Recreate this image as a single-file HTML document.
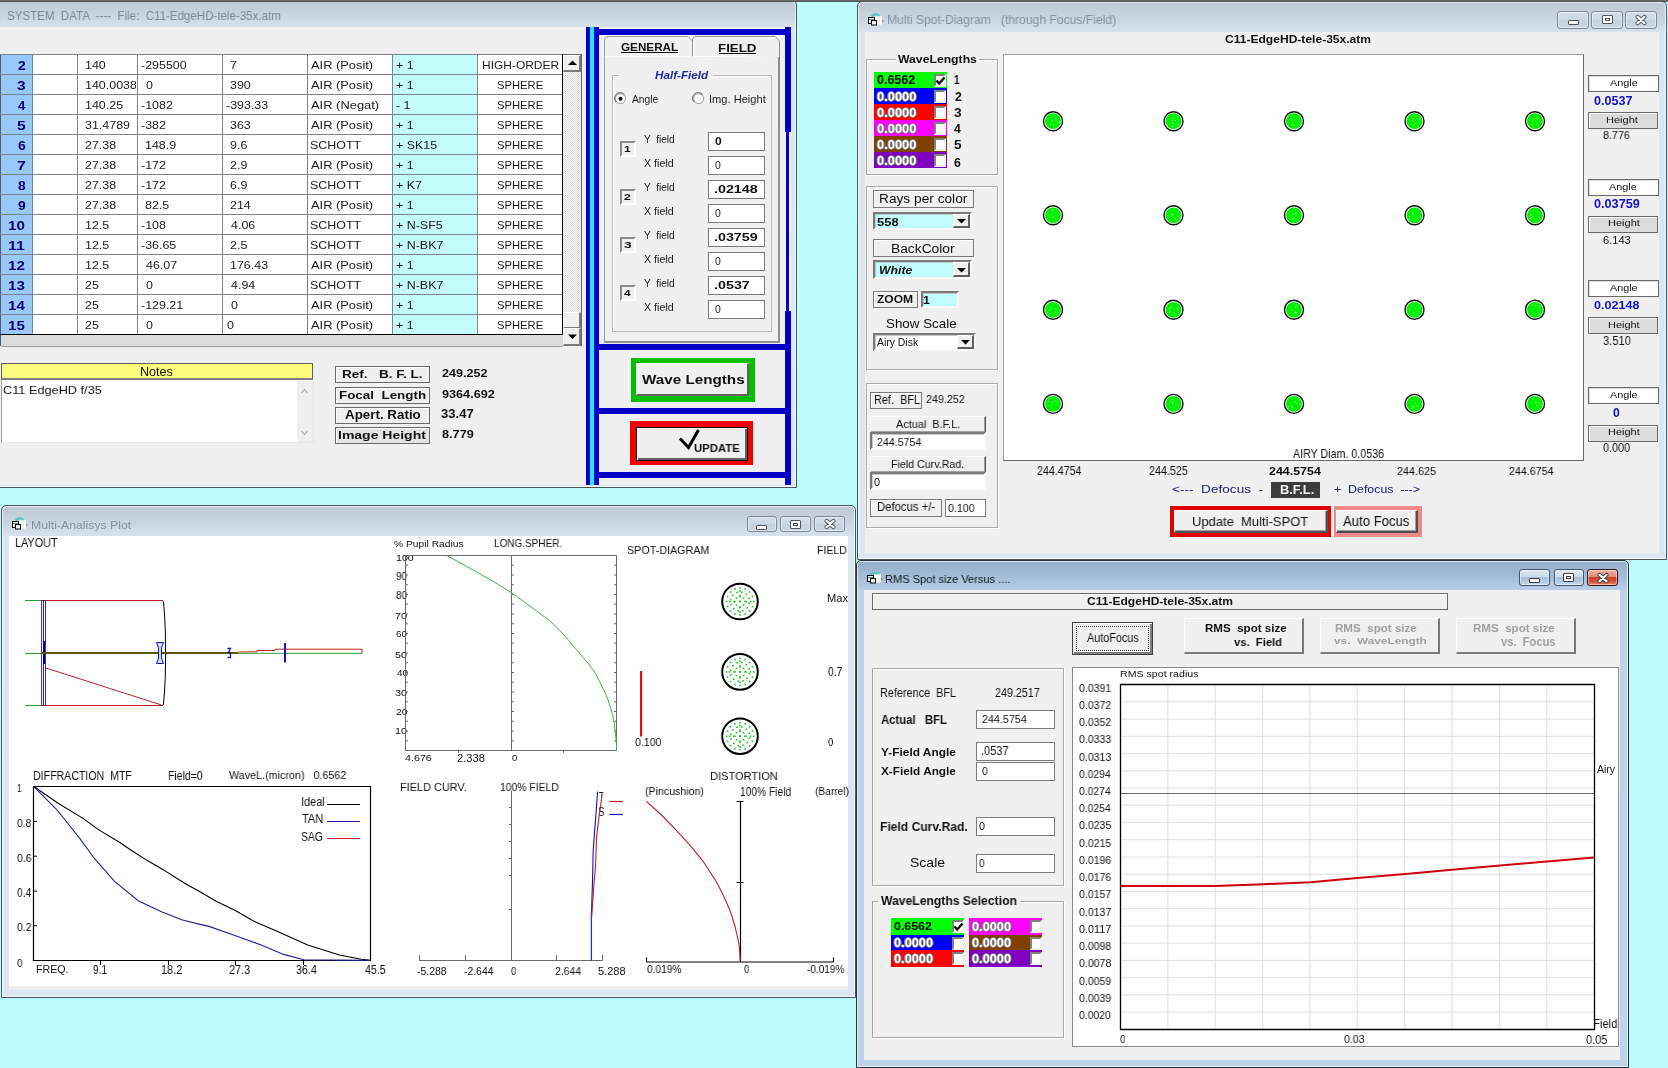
<!DOCTYPE html>
<html><head><meta charset="utf-8"><title>C11 EdgeHD</title>
<style>
*{margin:0;padding:0;box-sizing:border-box}
html,body{width:1668px;height:1068px;overflow:hidden}
body{position:relative;background:#bdfcfc;font-family:"Liberation Sans",sans-serif;font-size:11px;color:#000}
.a{position:absolute}
.t{position:absolute;white-space:pre;line-height:1;will-change:transform}
svg{position:absolute;left:0;top:0}
</style></head><body>
<div class="a" style="left:-10px;top:0px;width:807px;height:488px;border:1px solid #4a565e;border-radius:5px 5px 0 0;background:linear-gradient(#bdc9d5 0px,#c8d5e1 14px,#d6e3ef 26px,#d9e5f0 27px,#dce7f1 100%);box-shadow:inset 0 0 0 1px rgba(255,255,255,.7)"></div>
<div class="a" style="left:0px;top:27px;width:791px;height:458px;background:#f0f0f0"></div>
<div class="t" style="left:6.51px;top:8.58px;font-size:13.410px;transform:scaleX(0.8608);transform-origin:0 0;color:#7d8893;">SYSTEM  DATA  ----  File:  C11-EdgeHD-tele-35x.atm</div>
<div class="a" style="left:0px;top:54px;width:562px;height:280px;background:#fff"></div>
<div class="a" style="left:392px;top:54px;width:85px;height:280px;background:#c4fcfc"></div>
<div class="a" style="left:0px;top:54px;width:32px;height:280px;background:#99c8fa"></div>
<div class="a" style="left:0px;top:54px;width:1px;height:292px;background:#4a6078"></div>
<svg width="600" height="400" style="left:0;top:0"><g stroke="#7c8288" stroke-width="1"><path d="M0 54.5 H562" /><path d="M0 74.5 H562" /><path d="M0 94.5 H562" /><path d="M0 114.5 H562" /><path d="M0 134.5 H562" /><path d="M0 154.5 H562" /><path d="M0 174.5 H562" /><path d="M0 194.5 H562" /><path d="M0 214.5 H562" /><path d="M0 234.5 H562" /><path d="M0 254.5 H562" /><path d="M0 274.5 H562" /><path d="M0 294.5 H562" /><path d="M0 314.5 H562" /><path d="M0 334.5 H562" /><path d="M32.5 54 V334" /><path d="M77.5 54 V334" /><path d="M137.5 54 V334" /><path d="M222.5 54 V334" /><path d="M307.5 54 V334" /><path d="M392.5 54 V334" /><path d="M477.5 54 V334" /></g><path d="M0 334.5 H562.5 V54" stroke="#000" fill="none"/></svg>
<div class="t" style="left:17.78px;top:59.86px;font-size:12.500px;transform:scaleX(1.1150);transform-origin:0 0;font-weight:bold;color:#00006e;">2</div>
<div class="a" style="left:78px;top:55px;width:58px;height:19px;overflow:hidden">
<div class="a" style="left:-78px;top:-55px;width:700px;height:700px">
<div class="t" style="left:85.33px;top:59.82px;font-size:11.111px;transform:scaleX(1.1200);transform-origin:0 0;color:#1a1a1a;">140</div>
</div></div>
<div class="t" style="left:140.73px;top:59.82px;font-size:11.111px;transform:scaleX(1.1200);transform-origin:0 0;color:#1a1a1a;">-295500</div>
<div class="t" style="left:229.57px;top:59.82px;font-size:11.111px;transform:scaleX(1.1200);transform-origin:0 0;color:#1a1a1a;">7</div>
<div class="t" style="left:310.72px;top:59.63px;font-size:11.496px;transform:scaleX(1.1187);transform-origin:0 0;color:#1a1a1a;">AIR (Posit)</div>
<div class="t" style="left:395.57px;top:59.82px;font-size:11.111px;transform:scaleX(1.1200);transform-origin:0 0;color:#1a1a1a;">+ 1</div>
<div class="t" style="left:481.56px;top:59.82px;font-size:11.111px;transform:scaleX(1.0771);transform-origin:0 0;color:#1a1a1a;">HIGH-ORDER</div>
<div class="t" style="left:17.14px;top:79.80px;font-size:12.500px;transform:scaleX(1.2489);transform-origin:0 0;font-weight:bold;color:#00006e;">3</div>
<div class="a" style="left:78px;top:75px;width:58px;height:19px;overflow:hidden">
<div class="a" style="left:-78px;top:-75px;width:700px;height:700px">
<div class="t" style="left:85.33px;top:79.82px;font-size:11.111px;transform:scaleX(1.1200);transform-origin:0 0;color:#1a1a1a;">140.0038</div>
</div></div>
<div class="t" style="left:145.51px;top:79.82px;font-size:11.111px;transform:scaleX(1.1200);transform-origin:0 0;color:#1a1a1a;">0</div>
<div class="t" style="left:229.57px;top:79.82px;font-size:11.111px;transform:scaleX(1.1200);transform-origin:0 0;color:#1a1a1a;">390</div>
<div class="t" style="left:310.72px;top:79.63px;font-size:11.496px;transform:scaleX(1.1187);transform-origin:0 0;color:#1a1a1a;">AIR (Posit)</div>
<div class="t" style="left:395.57px;top:79.82px;font-size:11.111px;transform:scaleX(1.1200);transform-origin:0 0;color:#1a1a1a;">+ 1</div>
<div class="t" style="left:497.31px;top:79.82px;font-size:11.111px;transform:scaleX(1.0101);transform-origin:0 0;color:#1a1a1a;">SPHERE</div>
<div class="t" style="left:17.85px;top:99.80px;font-size:12.500px;transform:scaleX(1.0463);transform-origin:0 0;font-weight:bold;color:#00006e;">4</div>
<div class="a" style="left:78px;top:95px;width:58px;height:19px;overflow:hidden">
<div class="a" style="left:-78px;top:-95px;width:700px;height:700px">
<div class="t" style="left:85.33px;top:99.82px;font-size:11.111px;transform:scaleX(1.1200);transform-origin:0 0;color:#1a1a1a;">140.25</div>
</div></div>
<div class="t" style="left:140.73px;top:99.82px;font-size:11.111px;transform:scaleX(1.1200);transform-origin:0 0;color:#1a1a1a;">-1082</div>
<div class="t" style="left:225.57px;top:99.82px;font-size:11.111px;transform:scaleX(1.1200);transform-origin:0 0;color:#1a1a1a;">-393.33</div>
<div class="t" style="left:310.72px;top:99.63px;font-size:11.496px;transform:scaleX(1.1233);transform-origin:0 0;color:#1a1a1a;">AIR (Negat)</div>
<div class="t" style="left:395.57px;top:99.82px;font-size:11.111px;transform:scaleX(1.1200);transform-origin:0 0;color:#1a1a1a;">- 1</div>
<div class="t" style="left:497.31px;top:99.82px;font-size:11.111px;transform:scaleX(1.0101);transform-origin:0 0;color:#1a1a1a;">SPHERE</div>
<div class="t" style="left:17.14px;top:119.80px;font-size:12.500px;transform:scaleX(1.2489);transform-origin:0 0;font-weight:bold;color:#00006e;">5</div>
<div class="a" style="left:78px;top:115px;width:58px;height:19px;overflow:hidden">
<div class="a" style="left:-78px;top:-115px;width:700px;height:700px">
<div class="t" style="left:85.33px;top:119.82px;font-size:11.111px;transform:scaleX(1.1200);transform-origin:0 0;color:#1a1a1a;">31.4789</div>
</div></div>
<div class="t" style="left:140.73px;top:119.82px;font-size:11.111px;transform:scaleX(1.1200);transform-origin:0 0;color:#1a1a1a;">-382</div>
<div class="t" style="left:229.57px;top:119.82px;font-size:11.111px;transform:scaleX(1.1200);transform-origin:0 0;color:#1a1a1a;">363</div>
<div class="t" style="left:310.72px;top:119.63px;font-size:11.496px;transform:scaleX(1.1187);transform-origin:0 0;color:#1a1a1a;">AIR (Posit)</div>
<div class="t" style="left:395.57px;top:119.82px;font-size:11.111px;transform:scaleX(1.1200);transform-origin:0 0;color:#1a1a1a;">+ 1</div>
<div class="t" style="left:497.31px;top:119.82px;font-size:11.111px;transform:scaleX(1.0101);transform-origin:0 0;color:#1a1a1a;">SPHERE</div>
<div class="t" style="left:17.78px;top:139.86px;font-size:12.500px;transform:scaleX(1.1150);transform-origin:0 0;font-weight:bold;color:#00006e;">6</div>
<div class="a" style="left:78px;top:135px;width:58px;height:19px;overflow:hidden">
<div class="a" style="left:-78px;top:-135px;width:700px;height:700px">
<div class="t" style="left:85.33px;top:139.82px;font-size:11.111px;transform:scaleX(1.1200);transform-origin:0 0;color:#1a1a1a;">27.38</div>
</div></div>
<div class="t" style="left:144.73px;top:139.82px;font-size:11.111px;transform:scaleX(1.1200);transform-origin:0 0;color:#1a1a1a;">148.9</div>
<div class="t" style="left:229.57px;top:139.82px;font-size:11.111px;transform:scaleX(1.1200);transform-origin:0 0;color:#1a1a1a;">9.6</div>
<div class="t" style="left:310.33px;top:139.82px;font-size:11.111px;transform:scaleX(1.1200);transform-origin:0 0;color:#1a1a1a;">SCHOTT</div>
<div class="t" style="left:395.57px;top:139.82px;font-size:11.111px;transform:scaleX(1.1200);transform-origin:0 0;color:#1a1a1a;">+ SK15</div>
<div class="t" style="left:497.31px;top:139.82px;font-size:11.111px;transform:scaleX(1.0101);transform-origin:0 0;color:#1a1a1a;">SPHERE</div>
<div class="t" style="left:17.13px;top:159.80px;font-size:12.500px;transform:scaleX(1.2711);transform-origin:0 0;font-weight:bold;color:#00006e;">7</div>
<div class="a" style="left:78px;top:155px;width:58px;height:19px;overflow:hidden">
<div class="a" style="left:-78px;top:-155px;width:700px;height:700px">
<div class="t" style="left:85.33px;top:159.82px;font-size:11.111px;transform:scaleX(1.1200);transform-origin:0 0;color:#1a1a1a;">27.38</div>
</div></div>
<div class="t" style="left:140.73px;top:159.82px;font-size:11.111px;transform:scaleX(1.1200);transform-origin:0 0;color:#1a1a1a;">-172</div>
<div class="t" style="left:229.57px;top:159.82px;font-size:11.111px;transform:scaleX(1.1200);transform-origin:0 0;color:#1a1a1a;">2.9</div>
<div class="t" style="left:310.72px;top:159.63px;font-size:11.496px;transform:scaleX(1.1187);transform-origin:0 0;color:#1a1a1a;">AIR (Posit)</div>
<div class="t" style="left:395.57px;top:159.82px;font-size:11.111px;transform:scaleX(1.1200);transform-origin:0 0;color:#1a1a1a;">+ 1</div>
<div class="t" style="left:497.31px;top:159.82px;font-size:11.111px;transform:scaleX(1.0101);transform-origin:0 0;color:#1a1a1a;">SPHERE</div>
<div class="t" style="left:17.78px;top:179.86px;font-size:12.500px;transform:scaleX(1.1150);transform-origin:0 0;font-weight:bold;color:#00006e;">8</div>
<div class="a" style="left:78px;top:175px;width:58px;height:19px;overflow:hidden">
<div class="a" style="left:-78px;top:-175px;width:700px;height:700px">
<div class="t" style="left:85.33px;top:179.82px;font-size:11.111px;transform:scaleX(1.1200);transform-origin:0 0;color:#1a1a1a;">27.38</div>
</div></div>
<div class="t" style="left:140.73px;top:179.82px;font-size:11.111px;transform:scaleX(1.1200);transform-origin:0 0;color:#1a1a1a;">-172</div>
<div class="t" style="left:229.57px;top:179.82px;font-size:11.111px;transform:scaleX(1.1200);transform-origin:0 0;color:#1a1a1a;">6.9</div>
<div class="t" style="left:310.33px;top:179.82px;font-size:11.111px;transform:scaleX(1.1200);transform-origin:0 0;color:#1a1a1a;">SCHOTT</div>
<div class="t" style="left:395.57px;top:179.82px;font-size:11.111px;transform:scaleX(1.1200);transform-origin:0 0;color:#1a1a1a;">+ K7</div>
<div class="t" style="left:497.31px;top:179.82px;font-size:11.111px;transform:scaleX(1.0101);transform-origin:0 0;color:#1a1a1a;">SPHERE</div>
<div class="t" style="left:17.78px;top:199.86px;font-size:12.500px;transform:scaleX(1.1150);transform-origin:0 0;font-weight:bold;color:#00006e;">9</div>
<div class="a" style="left:78px;top:195px;width:58px;height:19px;overflow:hidden">
<div class="a" style="left:-78px;top:-195px;width:700px;height:700px">
<div class="t" style="left:85.33px;top:199.82px;font-size:11.111px;transform:scaleX(1.1200);transform-origin:0 0;color:#1a1a1a;">27.38</div>
</div></div>
<div class="t" style="left:144.73px;top:199.82px;font-size:11.111px;transform:scaleX(1.1200);transform-origin:0 0;color:#1a1a1a;">82.5</div>
<div class="t" style="left:229.57px;top:199.82px;font-size:11.111px;transform:scaleX(1.1200);transform-origin:0 0;color:#1a1a1a;">214</div>
<div class="t" style="left:310.72px;top:199.63px;font-size:11.496px;transform:scaleX(1.1187);transform-origin:0 0;color:#1a1a1a;">AIR (Posit)</div>
<div class="t" style="left:395.57px;top:199.82px;font-size:11.111px;transform:scaleX(1.1200);transform-origin:0 0;color:#1a1a1a;">+ 1</div>
<div class="t" style="left:497.31px;top:199.82px;font-size:11.111px;transform:scaleX(1.0101);transform-origin:0 0;color:#1a1a1a;">SPHERE</div>
<div class="t" style="left:8.40px;top:219.80px;font-size:12.500px;transform:scaleX(1.2162);transform-origin:0 0;font-weight:bold;color:#00006e;">10</div>
<div class="a" style="left:78px;top:215px;width:58px;height:19px;overflow:hidden">
<div class="a" style="left:-78px;top:-215px;width:700px;height:700px">
<div class="t" style="left:85.33px;top:219.82px;font-size:11.111px;transform:scaleX(1.1200);transform-origin:0 0;color:#1a1a1a;">12.5</div>
</div></div>
<div class="t" style="left:140.73px;top:219.82px;font-size:11.111px;transform:scaleX(1.1200);transform-origin:0 0;color:#1a1a1a;">-108</div>
<div class="t" style="left:230.53px;top:219.82px;font-size:11.111px;transform:scaleX(1.1200);transform-origin:0 0;color:#1a1a1a;">4.06</div>
<div class="t" style="left:310.33px;top:219.82px;font-size:11.111px;transform:scaleX(1.1200);transform-origin:0 0;color:#1a1a1a;">SCHOTT</div>
<div class="t" style="left:395.57px;top:219.82px;font-size:11.111px;transform:scaleX(1.1200);transform-origin:0 0;color:#1a1a1a;">+ N-SF5</div>
<div class="t" style="left:497.31px;top:219.82px;font-size:11.111px;transform:scaleX(1.0101);transform-origin:0 0;color:#1a1a1a;">SPHERE</div>
<div class="t" style="left:8.36px;top:239.80px;font-size:12.500px;transform:scaleX(1.2647);transform-origin:0 0;font-weight:bold;color:#00006e;">11</div>
<div class="a" style="left:78px;top:235px;width:58px;height:19px;overflow:hidden">
<div class="a" style="left:-78px;top:-235px;width:700px;height:700px">
<div class="t" style="left:85.33px;top:239.82px;font-size:11.111px;transform:scaleX(1.1200);transform-origin:0 0;color:#1a1a1a;">12.5</div>
</div></div>
<div class="t" style="left:140.73px;top:239.82px;font-size:11.111px;transform:scaleX(1.1200);transform-origin:0 0;color:#1a1a1a;">-36.65</div>
<div class="t" style="left:229.57px;top:239.82px;font-size:11.111px;transform:scaleX(1.1200);transform-origin:0 0;color:#1a1a1a;">2.5</div>
<div class="t" style="left:310.33px;top:239.82px;font-size:11.111px;transform:scaleX(1.1200);transform-origin:0 0;color:#1a1a1a;">SCHOTT</div>
<div class="t" style="left:395.57px;top:239.82px;font-size:11.111px;transform:scaleX(1.1200);transform-origin:0 0;color:#1a1a1a;">+ N-BK7</div>
<div class="t" style="left:497.31px;top:239.82px;font-size:11.111px;transform:scaleX(1.0101);transform-origin:0 0;color:#1a1a1a;">SPHERE</div>
<div class="t" style="left:8.40px;top:259.80px;font-size:12.500px;transform:scaleX(1.2116);transform-origin:0 0;font-weight:bold;color:#00006e;">12</div>
<div class="a" style="left:78px;top:255px;width:58px;height:19px;overflow:hidden">
<div class="a" style="left:-78px;top:-255px;width:700px;height:700px">
<div class="t" style="left:85.33px;top:259.82px;font-size:11.111px;transform:scaleX(1.1200);transform-origin:0 0;color:#1a1a1a;">12.5</div>
</div></div>
<div class="t" style="left:145.51px;top:259.82px;font-size:11.111px;transform:scaleX(1.1200);transform-origin:0 0;color:#1a1a1a;">46.07</div>
<div class="t" style="left:229.57px;top:259.82px;font-size:11.111px;transform:scaleX(1.1200);transform-origin:0 0;color:#1a1a1a;">176.43</div>
<div class="t" style="left:310.72px;top:259.63px;font-size:11.496px;transform:scaleX(1.1187);transform-origin:0 0;color:#1a1a1a;">AIR (Posit)</div>
<div class="t" style="left:395.57px;top:259.82px;font-size:11.111px;transform:scaleX(1.1200);transform-origin:0 0;color:#1a1a1a;">+ 1</div>
<div class="t" style="left:497.31px;top:259.82px;font-size:11.111px;transform:scaleX(1.0101);transform-origin:0 0;color:#1a1a1a;">SPHERE</div>
<div class="t" style="left:8.38px;top:279.80px;font-size:12.500px;transform:scaleX(1.2116);transform-origin:0 0;font-weight:bold;color:#00006e;">13</div>
<div class="a" style="left:78px;top:275px;width:58px;height:19px;overflow:hidden">
<div class="a" style="left:-78px;top:-275px;width:700px;height:700px">
<div class="t" style="left:85.33px;top:279.82px;font-size:11.111px;transform:scaleX(1.1200);transform-origin:0 0;color:#1a1a1a;">25</div>
</div></div>
<div class="t" style="left:145.51px;top:279.82px;font-size:11.111px;transform:scaleX(1.1200);transform-origin:0 0;color:#1a1a1a;">0</div>
<div class="t" style="left:230.53px;top:279.82px;font-size:11.111px;transform:scaleX(1.1200);transform-origin:0 0;color:#1a1a1a;">4.94</div>
<div class="t" style="left:310.33px;top:279.82px;font-size:11.111px;transform:scaleX(1.1200);transform-origin:0 0;color:#1a1a1a;">SCHOTT</div>
<div class="t" style="left:395.57px;top:279.82px;font-size:11.111px;transform:scaleX(1.1200);transform-origin:0 0;color:#1a1a1a;">+ N-BK7</div>
<div class="t" style="left:497.31px;top:279.82px;font-size:11.111px;transform:scaleX(1.0101);transform-origin:0 0;color:#1a1a1a;">SPHERE</div>
<div class="t" style="left:8.40px;top:299.80px;font-size:12.500px;transform:scaleX(1.2063);transform-origin:0 0;font-weight:bold;color:#00006e;">14</div>
<div class="a" style="left:78px;top:295px;width:58px;height:19px;overflow:hidden">
<div class="a" style="left:-78px;top:-295px;width:700px;height:700px">
<div class="t" style="left:85.33px;top:299.82px;font-size:11.111px;transform:scaleX(1.1200);transform-origin:0 0;color:#1a1a1a;">25</div>
</div></div>
<div class="t" style="left:140.73px;top:299.82px;font-size:11.111px;transform:scaleX(1.1200);transform-origin:0 0;color:#1a1a1a;">-129.21</div>
<div class="t" style="left:230.53px;top:299.82px;font-size:11.111px;transform:scaleX(1.1200);transform-origin:0 0;color:#1a1a1a;">0</div>
<div class="t" style="left:310.72px;top:299.63px;font-size:11.496px;transform:scaleX(1.1187);transform-origin:0 0;color:#1a1a1a;">AIR (Posit)</div>
<div class="t" style="left:395.57px;top:299.82px;font-size:11.111px;transform:scaleX(1.1200);transform-origin:0 0;color:#1a1a1a;">+ 1</div>
<div class="t" style="left:497.31px;top:299.82px;font-size:11.111px;transform:scaleX(1.0101);transform-origin:0 0;color:#1a1a1a;">SPHERE</div>
<div class="t" style="left:8.38px;top:319.80px;font-size:12.500px;transform:scaleX(1.2116);transform-origin:0 0;font-weight:bold;color:#00006e;">15</div>
<div class="a" style="left:78px;top:315px;width:58px;height:19px;overflow:hidden">
<div class="a" style="left:-78px;top:-315px;width:700px;height:700px">
<div class="t" style="left:85.33px;top:319.82px;font-size:11.111px;transform:scaleX(1.1200);transform-origin:0 0;color:#1a1a1a;">25</div>
</div></div>
<div class="t" style="left:145.51px;top:319.82px;font-size:11.111px;transform:scaleX(1.1200);transform-origin:0 0;color:#1a1a1a;">0</div>
<div class="t" style="left:226.53px;top:319.82px;font-size:11.111px;transform:scaleX(1.1200);transform-origin:0 0;color:#1a1a1a;">0</div>
<div class="t" style="left:310.72px;top:319.63px;font-size:11.496px;transform:scaleX(1.1187);transform-origin:0 0;color:#1a1a1a;">AIR (Posit)</div>
<div class="t" style="left:395.57px;top:319.82px;font-size:11.111px;transform:scaleX(1.1200);transform-origin:0 0;color:#1a1a1a;">+ 1</div>
<div class="t" style="left:497.31px;top:319.82px;font-size:11.111px;transform:scaleX(1.0101);transform-origin:0 0;color:#1a1a1a;">SPHERE</div>
<div class="a" style="left:563px;top:54px;width:19px;height:292px;background:repeating-conic-gradient(#fafafa 0 25%, #dedede 0 50%) 0 0/2px 2px;border-right:1px solid #6a6a6a;border-top:1px solid #6a6a6a"></div>
<div class="a" style="left:563px;top:55px;width:18px;height:17px;background:#f0f0f0;border-top:1px solid #fff;border-left:1px solid #fff;border-right:2px solid #7a7a7a;border-bottom:2px solid #7a7a7a"></div>
<svg style="left:568px;top:60px" width="9" height="6"><path d="M0 5 L4.5 0.5 L9 5z" fill="#000"/></svg>
<div class="a" style="left:563px;top:312px;width:18px;height:17px;background:#f0f0f0;border-top:1px solid #fff;border-left:1px solid #fff;border-right:2px solid #7a7a7a;border-bottom:2px solid #7a7a7a"></div>
<div class="a" style="left:563px;top:328px;width:18px;height:18px;background:#f0f0f0;border-top:1px solid #fff;border-left:1px solid #fff;border-right:2px solid #7a7a7a;border-bottom:2px solid #7a7a7a"></div>
<svg style="left:568px;top:334px" width="9" height="6"><path d="M0 0.5 L4.5 5 L9 0.5z" fill="#000"/></svg>
<div class="a" style="left:1px;top:335px;width:562px;height:12px;background:#dcdcdc;border-bottom:1px solid #a0a0a0"></div>
<div class="a" style="left:1px;top:363px;width:312px;height:17px;background:#fcfc7c;border:1px solid #606060;border-bottom:2px solid #808080"></div>
<div class="t" style="left:139.71px;top:366.08px;font-size:12.135px;transform:scaleX(1.0383);transform-origin:0 0;color:#111;">Notes</div>
<div class="a" style="left:1px;top:380px;width:313px;height:63px;background:#fff;border:1px solid #a0a0a0;border-top:0;border-right-color:#e8e8e8;border-bottom-color:#e8e8e8"></div>
<div class="t" style="left:2.68px;top:385.51px;font-size:10.139px;transform:scaleX(1.2566);transform-origin:0 0;color:#1a1a1a;">C11 EdgeHD f/35</div>
<div class="a" style="left:297px;top:381px;width:16px;height:61px;background:#f0f0f0"></div>
<svg style="left:300px;top:387px" width="10" height="52"><path d="M1.5 6 L4.5 2.5 L7.5 6" stroke="#b8b8b8" stroke-width="1.4" fill="none"/><path d="M1.5 44 L4.5 47.5 L7.5 44" stroke="#b8b8b8" stroke-width="1.4" fill="none"/></svg>
<div class="a" style="left:335px;top:366px;width:95px;height:17px;background:#f0f0f0;border:1px solid #6a6a6a;box-shadow:inset 1px 1px 0 #fff"></div>
<div class="t" style="left:341.78px;top:369.68px;font-size:10.056px;transform:scaleX(1.3481);transform-origin:0 0;font-weight:bold;color:#111;">Ref.   B. F. L.</div>
<div class="t" style="left:441.53px;top:366.91px;font-size:11.717px;transform:scaleX(1.0772);transform-origin:0 0;font-weight:bold;color:#111;">249.252</div>
<div class="a" style="left:335px;top:387px;width:95px;height:17px;background:#f0f0f0;border:1px solid #6a6a6a;box-shadow:inset 1px 1px 0 #fff"></div>
<div class="t" style="left:338.59px;top:389.69px;font-size:11.481px;transform:scaleX(1.1684);transform-origin:0 0;font-weight:bold;color:#111;">Focal  Length</div>
<div class="t" style="left:441.69px;top:388.44px;font-size:11.629px;transform:scaleX(1.0906);transform-origin:0 0;font-weight:bold;color:#111;">9364.692</div>
<div class="a" style="left:335px;top:407px;width:95px;height:17px;background:#f0f0f0;border:1px solid #6a6a6a;box-shadow:inset 1px 1px 0 #fff"></div>
<div class="t" style="left:344.51px;top:409.45px;font-size:12.250px;transform:scaleX(1.0913);transform-origin:0 0;font-weight:bold;color:#111;">Apert. Ratio</div>
<div class="t" style="left:440.78px;top:407.68px;font-size:12.043px;transform:scaleX(1.0871);transform-origin:0 0;font-weight:bold;color:#111;">33.47</div>
<div class="a" style="left:335px;top:427px;width:95px;height:17px;background:#e4e4e4;border:1px solid #6a6a6a;box-shadow:inset 1px 1px 0 #fff"></div>
<div class="t" style="left:337.72px;top:429.90px;font-size:11.427px;transform:scaleX(1.2266);transform-origin:0 0;font-weight:bold;color:#111;">Image Height</div>
<div class="t" style="left:441.64px;top:428.89px;font-size:11.372px;transform:scaleX(1.1179);transform-origin:0 0;font-weight:bold;color:#111;">8.779</div>
<div class="a" style="left:586px;top:27px;width:4px;height:458px;background:#0000c8"></div>
<div class="a" style="left:590px;top:27px;width:4px;height:458px;background:#20e8fa"></div>
<div class="a" style="left:594px;top:27px;width:5px;height:458px;background:#0000c8"></div>
<div class="a" style="left:599px;top:29px;width:192px;height:6px;background:#0000c8"></div>
<div class="a" style="left:785px;top:27px;width:6px;height:105px;background:#0000c8"></div>
<div class="a" style="left:786px;top:132px;width:3px;height:180px;background:#0000c8"></div>
<div class="a" style="left:785px;top:311px;width:6px;height:174px;background:#0000c8"></div>
<div class="a" style="left:599px;top:344px;width:187px;height:6px;background:#0000c8"></div>
<div class="a" style="left:599px;top:408px;width:187px;height:6px;background:#0000c8"></div>
<div class="a" style="left:599px;top:472px;width:187px;height:6px;background:#0000c8"></div>
<div class="a" style="left:604px;top:56px;width:176px;height:287px;background:#f0f0f0;border:1px solid #a0a0a0;border-top:1px solid #fff;border-right:2px solid #909090;border-bottom:2px solid #909090"></div>
<svg style="left:600px;top:30px" width="190" height="30"><path d="M4.5 26.5 V10 Q4.5 6.5 8 6.5 H88 L92.5 11 V26.5" fill="#f0f0f0" stroke="#a0a0a0"/><path d="M92.5 26 V10 Q92.5 6.5 96 6.5 H175 L179.5 11 V27" fill="#f0f0f0" stroke="#909090"/><path d="M93.5 26 V11 Q93.5 7.5 96 7.5 H175" fill="none" stroke="#fff"/></svg>
<div class="t" style="left:620.76px;top:41.99px;font-size:11.388px;transform:scaleX(1.0276);transform-origin:0 0;font-weight:bold;color:#111;">GENERAL</div>
<div class="a" style="left:620.5px;top:52px;width:57.2px;height:1px;background:#111"></div>
<div class="t" style="left:717.78px;top:43.04px;font-size:11.149px;transform:scaleX(1.1976);transform-origin:0 0;font-weight:bold;color:#111;">FIELD</div>
<div class="a" style="left:718.5px;top:53.3px;width:37.4px;height:1px;background:#111"></div>
<div class="a" style="left:612px;top:75px;width:160px;height:257px;border:1px solid #b8b8b8;box-shadow:inset 1px 1px 0 #fff"></div>
<div class="a" style="left:619px;top:68px;width:94px;height:12px;background:#f0f0f0"></div>
<div class="t" style="left:654.91px;top:69.82px;font-size:11.481px;transform:scaleX(1.0163);transform-origin:0 0;font-weight:bold;font-style:italic;color:#1e2aa0;">Half-Field</div>
<svg style="left:614px;top:92px" width="14" height="14"><circle cx="6.5" cy="6.7" r="5" fill="#fff" stroke="#9a9a9a"/><path d="M2 10 A5 5 0 0 1 10.5 2.5" stroke="#606060" fill="none"/><circle cx="6.5" cy="6.7" r="2" fill="#000"/></svg>
<div class="t" style="left:632.44px;top:94.66px;font-size:10.111px;transform:scaleX(1.0136);transform-origin:0 0;color:#1a1a1a;">Angle</div>
<svg style="left:692px;top:92px" width="14" height="14"><circle cx="6.7" cy="6.7" r="5" fill="#fff" stroke="#9a9a9a"/><path d="M2 10 A5 5 0 0 1 10.5 2.5" stroke="#606060" fill="none"/></svg>
<div class="t" style="left:709.29px;top:94.66px;font-size:10.111px;transform:scaleX(1.0976);transform-origin:0 0;color:#1a1a1a;">Img. Height</div>
<div class="a" style="left:620px;top:140.5px;width:16px;height:16px;background:#f0f0f0;border:2px solid #fff;border-top-color:#8a8a8a;border-left-color:#8a8a8a"></div>
<div class="t" style="left:624.35px;top:145.45px;font-size:9.171px;transform:scaleX(1.3056);transform-origin:0 0;font-weight:bold;color:#111;">1</div>
<div class="t" style="left:644.34px;top:135.02px;font-size:10.072px;transform:scaleX(1.0046);transform-origin:0 0;color:#1a1a1a;">Y  field</div>
<div class="t" style="left:644.33px;top:159.02px;font-size:10.072px;transform:scaleX(1.0638);transform-origin:0 0;color:#1a1a1a;">X field</div>
<div class="a" style="left:708px;top:132.3px;width:57px;height:19px;background:#fff;border:1px solid #7a7a7a"></div>
<div class="t" style="left:714.95px;top:136.41px;font-size:10.876px;transform:scaleX(1.1108);transform-origin:0 0;font-weight:bold;color:#111;">0</div>
<div class="a" style="left:708px;top:156.3px;width:57px;height:19px;background:#fff;border:1px solid #7a7a7a"></div>
<div class="t" style="left:714.73px;top:160.70px;font-size:10.461px;transform:scaleX(0.9801);transform-origin:0 0;color:#1a1a1a;">0</div>
<div class="a" style="left:620px;top:188.5px;width:16px;height:16px;background:#f0f0f0;border:2px solid #fff;border-top-color:#8a8a8a;border-left-color:#8a8a8a"></div>
<div class="t" style="left:624.42px;top:193.45px;font-size:9.171px;transform:scaleX(1.3394);transform-origin:0 0;font-weight:bold;color:#111;">2</div>
<div class="t" style="left:644.34px;top:183.02px;font-size:10.072px;transform:scaleX(1.0046);transform-origin:0 0;color:#1a1a1a;">Y  field</div>
<div class="t" style="left:644.33px;top:207.02px;font-size:10.072px;transform:scaleX(1.0638);transform-origin:0 0;color:#1a1a1a;">X field</div>
<div class="a" style="left:708px;top:180.3px;width:57px;height:19px;background:#fff;border:1px solid #7a7a7a"></div>
<div class="t" style="left:713.85px;top:183.78px;font-size:11.308px;transform:scaleX(1.2647);transform-origin:0 0;font-weight:bold;color:#111;">.02148</div>
<div class="a" style="left:708px;top:204.3px;width:57px;height:19px;background:#fff;border:1px solid #7a7a7a"></div>
<div class="t" style="left:714.73px;top:208.70px;font-size:10.461px;transform:scaleX(0.9801);transform-origin:0 0;color:#1a1a1a;">0</div>
<div class="a" style="left:620px;top:236.5px;width:16px;height:16px;background:#f0f0f0;border:2px solid #fff;border-top-color:#8a8a8a;border-left-color:#8a8a8a"></div>
<div class="t" style="left:623.62px;top:241.45px;font-size:9.171px;transform:scaleX(1.5052);transform-origin:0 0;font-weight:bold;color:#111;">3</div>
<div class="t" style="left:644.34px;top:231.02px;font-size:10.072px;transform:scaleX(1.0046);transform-origin:0 0;color:#1a1a1a;">Y  field</div>
<div class="t" style="left:644.33px;top:255.02px;font-size:10.072px;transform:scaleX(1.0638);transform-origin:0 0;color:#1a1a1a;">X field</div>
<div class="a" style="left:708px;top:228.3px;width:57px;height:19px;background:#fff;border:1px solid #7a7a7a"></div>
<div class="t" style="left:713.85px;top:231.78px;font-size:11.308px;transform:scaleX(1.2647);transform-origin:0 0;font-weight:bold;color:#111;">.03759</div>
<div class="a" style="left:708px;top:252.3px;width:57px;height:19px;background:#fff;border:1px solid #7a7a7a"></div>
<div class="t" style="left:714.73px;top:256.70px;font-size:10.461px;transform:scaleX(0.9801);transform-origin:0 0;color:#1a1a1a;">0</div>
<div class="a" style="left:620px;top:284.5px;width:16px;height:16px;background:#f0f0f0;border:2px solid #fff;border-top-color:#8a8a8a;border-left-color:#8a8a8a"></div>
<div class="t" style="left:624.21px;top:289.35px;font-size:9.075px;transform:scaleX(1.3071);transform-origin:0 0;font-weight:bold;color:#111;">4</div>
<div class="t" style="left:644.34px;top:279.02px;font-size:10.072px;transform:scaleX(1.0046);transform-origin:0 0;color:#1a1a1a;">Y  field</div>
<div class="t" style="left:644.33px;top:303.02px;font-size:10.072px;transform:scaleX(1.0638);transform-origin:0 0;color:#1a1a1a;">X field</div>
<div class="a" style="left:708px;top:276.3px;width:57px;height:19px;background:#fff;border:1px solid #7a7a7a"></div>
<div class="t" style="left:713.87px;top:279.78px;font-size:11.308px;transform:scaleX(1.2658);transform-origin:0 0;font-weight:bold;color:#111;">.0537</div>
<div class="a" style="left:708px;top:300.3px;width:57px;height:19px;background:#fff;border:1px solid #7a7a7a"></div>
<div class="t" style="left:714.73px;top:304.70px;font-size:10.461px;transform:scaleX(0.9801);transform-origin:0 0;color:#1a1a1a;">0</div>
<div class="a" style="left:631px;top:358px;width:124px;height:44px;background:#00c000"></div>
<div class="a" style="left:636px;top:363px;width:113px;height:33px;background:#f0f0f0;border-top:1px solid #fff;border-left:1px solid #fff;border-right:2px solid #606060;border-bottom:2px solid #606060"></div>
<div class="t" style="left:641.73px;top:374.05px;font-size:12.585px;transform:scaleX(1.2102);transform-origin:0 0;font-weight:bold;color:#111;">Wave Lengths</div>
<div class="a" style="left:630px;top:421px;width:123px;height:44px;background:#f20000"></div>
<div class="a" style="left:635.5px;top:426.5px;width:112px;height:34px;background:#f0f0f0;border:1px solid #000;box-shadow:inset 1px 1px 0 #fff, inset -2px -2px 0 #606060"></div>
<svg style="left:676px;top:427px" width="26" height="24"><path d="M4 11.5 L12.5 20.5 L22.5 3" stroke="#000" stroke-width="3" fill="none" stroke-linejoin="miter"/></svg>
<div class="t" style="left:693.71px;top:442.82px;font-size:11.481px;transform:scaleX(0.9850);transform-origin:0 0;font-weight:bold;color:#111;">UPDATE</div>
<div class="a" style="left:857px;top:1px;width:810px;height:559px;border:1px solid #4a565e;border-radius:5px 5px 0 0;background:linear-gradient(#bdc9d5 0px,#c8d5e1 16px,#d6e3ef 30px,#d9e5f0 31px,#dce7f1 100%);box-shadow:inset 0 0 0 1px rgba(255,255,255,.7)"></div>
<div class="a" style="left:865px;top:32px;width:794px;height:521px;background:#f0f0f0"></div>
<svg style="left:867px;top:13px" width="18" height="14" viewBox="0 0 18 14"><path d="M4.5 3.5 Q8.5 -0.5 12.5 3" stroke="#50c8c0" stroke-width="2.2" fill="none"/><rect x="8" y="3.5" width="7" height="8" fill="#fff"/><path d="M15 6.5 L17 8 L15 9.5z" fill="#8a8a8a"/><rect x="1.5" y="4.5" width="6" height="6" fill="#fff" stroke="#000"/><path d="M2 6.5 H7" stroke="#30a0a0"/><rect x="4.5" y="7.5" width="5" height="4.5" fill="#fff" stroke="#000"/></svg>
<div class="t" style="left:886.86px;top:14.49px;font-size:12.768px;transform:scaleX(0.9511);transform-origin:0 0;color:#8591a0;">Multi Spot-Diagram   (through Focus/Field)</div>
<div class="a" style="left:1557px;top:11px;width:32px;height:17.5px;border:1px solid #7c8a98;border-radius:3px;background:linear-gradient(#d3dee9,#cbd7e3 50%,#c4d1de 51%,#ccd8e4);box-shadow:inset 0 0 0 1px rgba(255,255,255,.45)"></div>
<div class="a" style="left:1567.5px;top:20.2px;width:11px;height:5px;border:1px solid #4e5660;background:#fff;border-radius:1px"></div>
<div class="a" style="left:1591px;top:11px;width:32px;height:17.5px;border:1px solid #7c8a98;border-radius:3px;background:linear-gradient(#d3dee9,#cbd7e3 50%,#c4d1de 51%,#ccd8e4);box-shadow:inset 0 0 0 1px rgba(255,255,255,.45)"></div>
<div class="a" style="left:1601.5px;top:15.2px;width:11px;height:9px;border:1px solid #4e5660;background:#fff;border-radius:1px"></div>
<div class="a" style="left:1604.5px;top:18.2px;width:5px;height:3px;border:1px solid #4e5660"></div>
<div class="a" style="left:1625px;top:11px;width:32px;height:17.5px;border:1px solid #7c8a98;border-radius:3px;background:linear-gradient(#d3dee9,#cbd7e3 50%,#c4d1de 51%,#ccd8e4);box-shadow:inset 0 0 0 1px rgba(255,255,255,.45)"></div>
<svg style="left:1634.0px;top:13.8px" width="14" height="12" viewBox="0 0 14 12"><path d="M3.5 2.8 L10.5 9.2 M10.5 2.8 L3.5 9.2" stroke="#4e5660" stroke-width="4" stroke-linecap="round"/><path d="M3.5 2.8 L10.5 9.2 M10.5 2.8 L3.5 9.2" stroke="#fff" stroke-width="2.2" stroke-linecap="round"/></svg>
<div class="t" style="left:1224.85px;top:33.31px;font-size:11.745px;transform:scaleX(1.0274);transform-origin:0 0;font-weight:bold;color:#111;">C11-EdgeHD-tele-35x.atm</div>
<div class="a" style="left:866px;top:59px;width:132px;height:116px;border:1px solid #a8a8a8;box-shadow:1px 1px 0 #fff inset, 1px 1px 0 #fff"></div>
<div class="a" style="left:896px;top:53px;width:83px;height:10px;background:#f0f0f0"></div>
<div class="t" style="left:898.32px;top:53.74px;font-size:10.949px;transform:scaleX(1.1157);transform-origin:0 0;font-weight:bold;color:#111;">WaveLengths</div>
<div class="a" style="left:874px;top:72px;width:73px;height:16px;background:#00ff00"></div>
<div class="t" style="left:877.21px;top:74.17px;font-size:12.083px;transform:scaleX(1.0341);transform-origin:0 0;font-weight:bold;">0.6562</div>
<div class="a" style="left:934px;top:74px;width:12px;height:13px;background:#fff;border:2px solid #f0f0f0;border-top-color:#808080;border-left-color:#808080"></div>
<svg style="left:935px;top:76px" width="11" height="10"><path d="M1.5 4.5 L4.2 7.5 L9.5 1.5" stroke="#000" stroke-width="2.2" fill="none"/></svg>
<div class="t" style="left:954.13px;top:74.09px;font-size:12.013px;transform:scaleX(0.8326);transform-origin:0 0;font-weight:bold;color:#111;">1</div>
<div class="a" style="left:874px;top:88px;width:73px;height:16px;background:#0000ff"></div>
<div class="t" style="left:877.04px;top:90.73px;font-size:12.078px;transform:scaleX(1.0664);transform-origin:0 0;font-weight:bold;color:#fff;text-shadow:1px 0 0 #808080,-1px 0 0 #808080,0 1px 0 #808080,0 -1px 0 #808080;">0.0000</div>
<div class="a" style="left:934px;top:90px;width:12px;height:13px;background:#fff;border:2px solid #f0f0f0;border-top-color:#808080;border-left-color:#808080"></div>
<div class="t" style="left:954.67px;top:90.64px;font-size:12.367px;transform:scaleX(0.9704);transform-origin:0 0;font-weight:bold;color:#111;">2</div>
<div class="a" style="left:874px;top:104px;width:73px;height:16px;background:#ff0000"></div>
<div class="t" style="left:877.04px;top:106.73px;font-size:12.078px;transform:scaleX(1.0664);transform-origin:0 0;font-weight:bold;color:#fff;text-shadow:1px 0 0 #808080,-1px 0 0 #808080,0 1px 0 #808080,0 -1px 0 #808080;">0.0000</div>
<div class="a" style="left:934px;top:106px;width:12px;height:13px;background:#fff;border:2px solid #f0f0f0;border-top-color:#808080;border-left-color:#808080"></div>
<div class="t" style="left:953.67px;top:107.24px;font-size:12.014px;transform:scaleX(1.1485);transform-origin:0 0;font-weight:bold;color:#111;">3</div>
<div class="a" style="left:874px;top:120px;width:73px;height:16px;background:#ff00ff"></div>
<div class="t" style="left:877.04px;top:122.73px;font-size:12.078px;transform:scaleX(1.0664);transform-origin:0 0;font-weight:bold;color:#fff;text-shadow:1px 0 0 #808080,-1px 0 0 #808080,0 1px 0 #808080,0 -1px 0 #808080;">0.0000</div>
<div class="a" style="left:934px;top:122px;width:12px;height:13px;background:#fff;border:2px solid #f0f0f0;border-top-color:#808080;border-left-color:#808080"></div>
<div class="t" style="left:954.38px;top:122.54px;font-size:12.225px;transform:scaleX(0.9958);transform-origin:0 0;font-weight:bold;color:#111;">4</div>
<div class="a" style="left:874px;top:136px;width:73px;height:16px;background:#804000"></div>
<div class="t" style="left:877.04px;top:138.73px;font-size:12.078px;transform:scaleX(1.0664);transform-origin:0 0;font-weight:bold;color:#fff;text-shadow:1px 0 0 #808080,-1px 0 0 #808080,0 1px 0 #808080,0 -1px 0 #808080;">0.0000</div>
<div class="a" style="left:934px;top:138px;width:12px;height:13px;background:#fff;border:2px solid #f0f0f0;border-top-color:#808080;border-left-color:#808080"></div>
<div class="t" style="left:953.70px;top:138.78px;font-size:12.084px;transform:scaleX(1.1299);transform-origin:0 0;font-weight:bold;color:#111;">5</div>
<div class="a" style="left:874px;top:152px;width:73px;height:16px;background:#8000c0"></div>
<div class="t" style="left:877.04px;top:154.73px;font-size:12.078px;transform:scaleX(1.0664);transform-origin:0 0;font-weight:bold;color:#fff;text-shadow:1px 0 0 #808080,-1px 0 0 #808080,0 1px 0 #808080,0 -1px 0 #808080;">0.0000</div>
<div class="a" style="left:934px;top:154px;width:12px;height:13px;background:#fff;border:2px solid #f0f0f0;border-top-color:#808080;border-left-color:#808080"></div>
<div class="t" style="left:954.36px;top:156.71px;font-size:12.154px;transform:scaleX(1.0122);transform-origin:0 0;font-weight:bold;color:#111;">6</div>
<div class="a" style="left:866px;top:186px;width:132px;height:184px;border:1px solid #a8a8a8;box-shadow:1px 1px 0 #fff inset, 1px 1px 0 #fff"></div>
<div class="a" style="left:873px;top:190px;width:101px;height:18px;background:#f0f0f0;border:1px solid #7a7a7a;box-shadow:inset 1px 1px 0 #fff"></div>
<div class="t" style="left:878.94px;top:193.21px;font-size:12.577px;transform:scaleX(1.0908);transform-origin:0 0;color:#111;">Rays per color</div>
<div class="a" style="left:873px;top:212px;width:99px;height:18px;background:#c0fcfc;border:2px solid #f8f8f8;border-top-color:#7a7a7a;border-left-color:#7a7a7a;box-shadow:inset 1px 1px 0 #c8c8c8"></div>
<div class="a" style="left:953px;top:214px;width:17px;height:14px;background:#f0f0f0;border:1px solid #fff;border-right:2px solid #606060;border-bottom:2px solid #606060"></div>
<svg style="left:957px;top:219.0px" width="9" height="6"><path d="M0 0 H9 L4.5 4.5z" fill="#000"/></svg>
<div class="t" style="left:876.78px;top:217.27px;font-size:11.391px;transform:scaleX(1.1411);transform-origin:0 0;font-weight:bold;color:#111;">558</div>
<div class="a" style="left:873px;top:239px;width:101px;height:18px;background:#f0f0f0;border:1px solid #7a7a7a;box-shadow:inset 1px 1px 0 #fff"></div>
<div class="t" style="left:891.44px;top:242.22px;font-size:13.112px;transform:scaleX(1.0514);transform-origin:0 0;color:#111;">BackColor</div>
<div class="a" style="left:873px;top:260px;width:99px;height:19px;background:#c0fcfc;border:2px solid #f8f8f8;border-top-color:#7a7a7a;border-left-color:#7a7a7a;box-shadow:inset 1px 1px 0 #c8c8c8"></div>
<div class="a" style="left:953px;top:262px;width:17px;height:15px;background:#f0f0f0;border:1px solid #fff;border-right:2px solid #606060;border-bottom:2px solid #606060"></div>
<svg style="left:957px;top:267.5px" width="9" height="6"><path d="M0 0 H9 L4.5 4.5z" fill="#000"/></svg>
<div class="t" style="left:879.20px;top:265.75px;font-size:10.072px;transform:scaleX(1.2187);transform-origin:0 0;font-weight:bold;font-style:italic;color:#111;">White</div>
<div class="a" style="left:873px;top:291px;width:45px;height:17px;background:#f0f0f0;border:1px solid #7a7a7a;box-shadow:inset 1px 1px 0 #fff"></div>
<div class="t" style="left:876.80px;top:292.91px;font-size:11.717px;transform:scaleX(1.0302);transform-origin:0 0;font-weight:bold;color:#111;">ZOOM</div>
<div class="a" style="left:921px;top:291px;width:38px;height:17px;background:#c0fcfc;border:2px solid #f8f8f8;border-top-color:#7a7a7a;border-left-color:#7a7a7a;box-shadow:inset 1px 1px 0 #c8c8c8"></div>
<div class="t" style="left:923.26px;top:295.37px;font-size:11.543px;transform:scaleX(1.0718);transform-origin:0 0;font-weight:bold;color:#111;">1</div>
<div class="t" style="left:885.79px;top:317.18px;font-size:13.379px;transform:scaleX(1.0005);transform-origin:0 0;color:#111;">Show Scale</div>
<div class="a" style="left:873px;top:333px;width:103px;height:18px;background:#fff;border:2px solid #f8f8f8;border-top-color:#7a7a7a;border-left-color:#7a7a7a;box-shadow:inset 1px 1px 0 #c8c8c8"></div>
<div class="a" style="left:957px;top:335px;width:17px;height:14px;background:#f0f0f0;border:1px solid #fff;border-right:2px solid #606060;border-bottom:2px solid #606060"></div>
<svg style="left:961px;top:340.0px" width="9" height="6"><path d="M0 0 H9 L4.5 4.5z" fill="#000"/></svg>
<div class="t" style="left:876.57px;top:337.61px;font-size:10.188px;transform:scaleX(1.0247);transform-origin:0 0;color:#111;">Airy Disk</div>
<div class="a" style="left:866px;top:383px;width:132px;height:145px;border:1px solid #a8a8a8;box-shadow:1px 1px 0 #fff inset, 1px 1px 0 #fff"></div>
<div class="a" style="left:870px;top:392px;width:52px;height:17px;background:#f0f0f0;border:1px solid #7a7a7a;box-shadow:inset 1px 1px 0 #fff"></div>
<div class="t" style="left:874.23px;top:393.69px;font-size:12.225px;transform:scaleX(0.8943);transform-origin:0 0;color:#111;">Ref.  BFL</div>
<div class="t" style="left:925.82px;top:393.45px;font-size:11.715px;transform:scaleX(0.9172);transform-origin:0 0;color:#111;">249.252</div>
<div class="a" style="left:870px;top:416px;width:116px;height:17px;background:#f0f0f0;border:1px solid #a0a0a0;border-top-color:#fff;border-left-color:#fff;border-bottom:1px solid #505050;border-right:1px solid #505050;box-shadow:inset -1px -1px 0 #a0a0a0"></div>
<div class="t" style="left:896.13px;top:418.82px;font-size:11.111px;transform:scaleX(0.9817);transform-origin:0 0;color:#111;">Actual  B.F.L.</div>
<div class="a" style="left:870px;top:432px;width:116px;height:18px;background:#fff;border:2px solid #f8f8f8;border-top-color:#7a7a7a;border-left-color:#7a7a7a;box-shadow:inset 1px 1px 0 #c8c8c8"></div>
<div class="t" style="left:876.72px;top:437.08px;font-size:11.543px;transform:scaleX(0.9203);transform-origin:0 0;color:#111;">244.5754</div>
<div class="a" style="left:870px;top:456px;width:116px;height:17px;background:#f0f0f0;border:1px solid #a0a0a0;border-top-color:#fff;border-left-color:#fff;border-bottom:1px solid #505050;border-right:1px solid #505050;box-shadow:inset -1px -1px 0 #a0a0a0"></div>
<div class="t" style="left:890.51px;top:459.20px;font-size:11.391px;transform:scaleX(0.9364);transform-origin:0 0;color:#111;">Field Curv.Rad.</div>
<div class="a" style="left:870px;top:472px;width:116px;height:18px;background:#fff;border:2px solid #f8f8f8;border-top-color:#7a7a7a;border-left-color:#7a7a7a;box-shadow:inset 1px 1px 0 #c8c8c8"></div>
<div class="t" style="left:873.62px;top:477.36px;font-size:10.866px;transform:scaleX(0.9362);transform-origin:0 0;color:#111;">0</div>
<div class="a" style="left:870px;top:499px;width:72px;height:18px;background:#f0f0f0;border:1px solid #7a7a7a;box-shadow:inset 1px 1px 0 #fff"></div>
<div class="t" style="left:876.92px;top:500.66px;font-size:12.084px;transform:scaleX(0.9366);transform-origin:0 0;color:#111;">Defocus +/-</div>
<div class="a" style="left:945px;top:499px;width:41px;height:18px;background:#fff;border:1px solid #7c7c7c"></div>
<div class="t" style="left:947.86px;top:501.72px;font-size:11.650px;transform:scaleX(0.9112);transform-origin:0 0;color:#111;">0.100</div>
<div class="a" style="left:1003px;top:54px;width:581px;height:407px;background:#fff;border:1px solid #a0a0a0;border-right-color:#6a6a6a;border-bottom-color:#6a6a6a"></div>
<svg width="1668" height="560" style="left:0;top:0"><g fill="#fff" stroke="#111" stroke-width="1.4"><circle cx="1053" cy="121.2" r="9.5"/><circle cx="1053" cy="215.3" r="9.5"/><circle cx="1053" cy="309.8" r="9.5"/><circle cx="1053" cy="403.9" r="9.5"/><circle cx="1173.5" cy="121.2" r="9.5"/><circle cx="1173.5" cy="215.3" r="9.5"/><circle cx="1173.5" cy="309.8" r="9.5"/><circle cx="1173.5" cy="403.9" r="9.5"/><circle cx="1294" cy="121.2" r="9.5"/><circle cx="1294" cy="215.3" r="9.5"/><circle cx="1294" cy="309.8" r="9.5"/><circle cx="1294" cy="403.9" r="9.5"/><circle cx="1414.5" cy="121.2" r="9.5"/><circle cx="1414.5" cy="215.3" r="9.5"/><circle cx="1414.5" cy="309.8" r="9.5"/><circle cx="1414.5" cy="403.9" r="9.5"/><circle cx="1535" cy="121.2" r="9.5"/><circle cx="1535" cy="215.3" r="9.5"/><circle cx="1535" cy="309.8" r="9.5"/><circle cx="1535" cy="403.9" r="9.5"/></g><g fill="#00f000"><circle cx="1053" cy="121.2" r="7.9"/><circle cx="1053" cy="215.3" r="7.9"/><circle cx="1053" cy="309.8" r="7.9"/><circle cx="1053" cy="403.9" r="7.9"/><circle cx="1173.5" cy="121.2" r="7.9"/><circle cx="1173.5" cy="215.3" r="7.9"/><circle cx="1173.5" cy="309.8" r="7.9"/><circle cx="1173.5" cy="403.9" r="7.9"/><circle cx="1294" cy="121.2" r="7.9"/><circle cx="1294" cy="215.3" r="7.9"/><circle cx="1294" cy="309.8" r="7.9"/><circle cx="1294" cy="403.9" r="7.9"/><circle cx="1414.5" cy="121.2" r="7.9"/><circle cx="1414.5" cy="215.3" r="7.9"/><circle cx="1414.5" cy="309.8" r="7.9"/><circle cx="1414.5" cy="403.9" r="7.9"/><circle cx="1535" cy="121.2" r="7.9"/><circle cx="1535" cy="215.3" r="7.9"/><circle cx="1535" cy="309.8" r="7.9"/><circle cx="1535" cy="403.9" r="7.9"/></g><g fill="#a0f8a0"><rect x="1053.3" y="125.4" width="1" height="1"/><rect x="1049.9" y="124.5" width="1" height="1"/><rect x="1051.7" y="119.9" width="1" height="1"/><rect x="1058.7" y="121.7" width="1" height="1"/><rect x="1052.8" y="123.9" width="1" height="1"/><rect x="1056.8" y="121.1" width="1" height="1"/><rect x="1055.0" y="117.9" width="1" height="1"/><rect x="1051.6" y="119.5" width="1" height="1"/><rect x="1049.1" y="210.9" width="1" height="1"/><rect x="1047.8" y="214.5" width="1" height="1"/><rect x="1052.1" y="213.7" width="1" height="1"/><rect x="1053.2" y="210.9" width="1" height="1"/><rect x="1052.5" y="216.9" width="1" height="1"/><rect x="1055.6" y="212.4" width="1" height="1"/><rect x="1051.9" y="209.5" width="1" height="1"/><rect x="1051.6" y="209.3" width="1" height="1"/><rect x="1048.7" y="313.2" width="1" height="1"/><rect x="1047.2" y="311.9" width="1" height="1"/><rect x="1054.4" y="308.4" width="1" height="1"/><rect x="1054.7" y="311.7" width="1" height="1"/><rect x="1056.6" y="309.0" width="1" height="1"/><rect x="1050.9" y="307.7" width="1" height="1"/><rect x="1049.6" y="309.6" width="1" height="1"/><rect x="1050.4" y="313.4" width="1" height="1"/><rect x="1047.8" y="400.9" width="1" height="1"/><rect x="1050.5" y="398.3" width="1" height="1"/><rect x="1057.0" y="398.8" width="1" height="1"/><rect x="1051.9" y="401.9" width="1" height="1"/><rect x="1057.0" y="399.0" width="1" height="1"/><rect x="1056.6" y="401.4" width="1" height="1"/><rect x="1052.4" y="401.4" width="1" height="1"/><rect x="1055.1" y="400.1" width="1" height="1"/><rect x="1173.1" y="123.0" width="1" height="1"/><rect x="1177.4" y="116.1" width="1" height="1"/><rect x="1178.2" y="124.1" width="1" height="1"/><rect x="1171.6" y="122.4" width="1" height="1"/><rect x="1172.0" y="126.3" width="1" height="1"/><rect x="1174.7" y="120.0" width="1" height="1"/><rect x="1172.2" y="120.1" width="1" height="1"/><rect x="1172.9" y="118.1" width="1" height="1"/><rect x="1178.2" y="210.9" width="1" height="1"/><rect x="1167.0" y="215.1" width="1" height="1"/><rect x="1172.8" y="217.1" width="1" height="1"/><rect x="1172.2" y="214.3" width="1" height="1"/><rect x="1174.6" y="218.6" width="1" height="1"/><rect x="1171.7" y="213.8" width="1" height="1"/><rect x="1179.1" y="216.8" width="1" height="1"/><rect x="1171.0" y="221.1" width="1" height="1"/><rect x="1176.2" y="307.8" width="1" height="1"/><rect x="1169.5" y="310.8" width="1" height="1"/><rect x="1170.7" y="306.3" width="1" height="1"/><rect x="1169.2" y="308.1" width="1" height="1"/><rect x="1177.3" y="308.3" width="1" height="1"/><rect x="1168.9" y="311.9" width="1" height="1"/><rect x="1173.7" y="312.8" width="1" height="1"/><rect x="1177.6" y="309.2" width="1" height="1"/><rect x="1172.0" y="403.4" width="1" height="1"/><rect x="1169.7" y="406.1" width="1" height="1"/><rect x="1178.0" y="404.5" width="1" height="1"/><rect x="1172.3" y="402.6" width="1" height="1"/><rect x="1170.8" y="401.2" width="1" height="1"/><rect x="1172.1" y="401.0" width="1" height="1"/><rect x="1172.1" y="398.9" width="1" height="1"/><rect x="1175.3" y="404.2" width="1" height="1"/><rect x="1291.2" y="115.6" width="1" height="1"/><rect x="1294.0" y="125.0" width="1" height="1"/><rect x="1291.4" y="119.5" width="1" height="1"/><rect x="1292.0" y="123.5" width="1" height="1"/><rect x="1291.0" y="124.5" width="1" height="1"/><rect x="1292.9" y="124.4" width="1" height="1"/><rect x="1294.2" y="119.6" width="1" height="1"/><rect x="1289.3" y="119.0" width="1" height="1"/><rect x="1293.0" y="217.7" width="1" height="1"/><rect x="1294.9" y="212.8" width="1" height="1"/><rect x="1295.4" y="218.7" width="1" height="1"/><rect x="1293.4" y="213.4" width="1" height="1"/><rect x="1292.6" y="218.2" width="1" height="1"/><rect x="1295.8" y="212.1" width="1" height="1"/><rect x="1295.4" y="213.5" width="1" height="1"/><rect x="1291.5" y="219.4" width="1" height="1"/><rect x="1296.8" y="307.3" width="1" height="1"/><rect x="1294.3" y="311.9" width="1" height="1"/><rect x="1291.6" y="309.3" width="1" height="1"/><rect x="1296.0" y="304.5" width="1" height="1"/><rect x="1295.2" y="312.4" width="1" height="1"/><rect x="1295.7" y="305.4" width="1" height="1"/><rect x="1295.1" y="306.8" width="1" height="1"/><rect x="1296.0" y="312.0" width="1" height="1"/><rect x="1294.8" y="401.2" width="1" height="1"/><rect x="1292.0" y="406.8" width="1" height="1"/><rect x="1290.9" y="405.6" width="1" height="1"/><rect x="1296.0" y="402.8" width="1" height="1"/><rect x="1300.2" y="404.1" width="1" height="1"/><rect x="1298.7" y="399.5" width="1" height="1"/><rect x="1288.3" y="406.4" width="1" height="1"/><rect x="1296.3" y="402.7" width="1" height="1"/><rect x="1414.3" y="115.5" width="1" height="1"/><rect x="1412.4" y="117.7" width="1" height="1"/><rect x="1413.7" y="124.3" width="1" height="1"/><rect x="1414.8" y="123.0" width="1" height="1"/><rect x="1412.0" y="119.6" width="1" height="1"/><rect x="1415.1" y="119.6" width="1" height="1"/><rect x="1418.6" y="118.4" width="1" height="1"/><rect x="1419.8" y="118.4" width="1" height="1"/><rect x="1418.0" y="212.7" width="1" height="1"/><rect x="1419.7" y="215.7" width="1" height="1"/><rect x="1415.9" y="217.9" width="1" height="1"/><rect x="1412.4" y="211.8" width="1" height="1"/><rect x="1409.2" y="218.5" width="1" height="1"/><rect x="1412.1" y="213.2" width="1" height="1"/><rect x="1414.4" y="221.1" width="1" height="1"/><rect x="1409.1" y="216.1" width="1" height="1"/><rect x="1413.0" y="311.8" width="1" height="1"/><rect x="1409.0" y="308.6" width="1" height="1"/><rect x="1417.1" y="314.6" width="1" height="1"/><rect x="1419.4" y="307.2" width="1" height="1"/><rect x="1415.2" y="308.4" width="1" height="1"/><rect x="1410.5" y="305.6" width="1" height="1"/><rect x="1417.2" y="310.7" width="1" height="1"/><rect x="1414.0" y="313.9" width="1" height="1"/><rect x="1411.1" y="405.7" width="1" height="1"/><rect x="1414.7" y="402.4" width="1" height="1"/><rect x="1416.5" y="404.6" width="1" height="1"/><rect x="1415.8" y="405.2" width="1" height="1"/><rect x="1420.2" y="403.0" width="1" height="1"/><rect x="1417.9" y="406.0" width="1" height="1"/><rect x="1413.3" y="406.7" width="1" height="1"/><rect x="1411.7" y="407.7" width="1" height="1"/><rect x="1532.2" y="119.5" width="1" height="1"/><rect x="1536.1" y="124.1" width="1" height="1"/><rect x="1538.0" y="124.2" width="1" height="1"/><rect x="1534.3" y="117.9" width="1" height="1"/><rect x="1537.1" y="122.4" width="1" height="1"/><rect x="1531.8" y="124.4" width="1" height="1"/><rect x="1535.7" y="117.9" width="1" height="1"/><rect x="1536.5" y="116.8" width="1" height="1"/><rect x="1531.9" y="216.7" width="1" height="1"/><rect x="1530.0" y="215.4" width="1" height="1"/><rect x="1530.6" y="217.7" width="1" height="1"/><rect x="1532.4" y="216.0" width="1" height="1"/><rect x="1530.1" y="214.2" width="1" height="1"/><rect x="1538.3" y="216.9" width="1" height="1"/><rect x="1529.7" y="217.9" width="1" height="1"/><rect x="1538.1" y="214.0" width="1" height="1"/><rect x="1539.4" y="306.5" width="1" height="1"/><rect x="1534.7" y="313.6" width="1" height="1"/><rect x="1539.0" y="313.7" width="1" height="1"/><rect x="1531.9" y="304.7" width="1" height="1"/><rect x="1536.3" y="305.1" width="1" height="1"/><rect x="1534.6" y="305.5" width="1" height="1"/><rect x="1538.5" y="312.5" width="1" height="1"/><rect x="1537.2" y="309.9" width="1" height="1"/><rect x="1535.3" y="402.2" width="1" height="1"/><rect x="1536.7" y="405.0" width="1" height="1"/><rect x="1536.8" y="402.3" width="1" height="1"/><rect x="1540.6" y="404.7" width="1" height="1"/><rect x="1539.1" y="407.8" width="1" height="1"/><rect x="1532.4" y="398.9" width="1" height="1"/><rect x="1539.2" y="402.6" width="1" height="1"/><rect x="1535.5" y="402.3" width="1" height="1"/></g></svg>
<div class="t" style="left:1293.14px;top:448.00px;font-size:12.158px;transform:scaleX(0.8798);transform-origin:0 0;color:#111;">AIRY Diam. 0.0536</div>
<div class="t" style="left:1036.73px;top:464.66px;font-size:12.084px;transform:scaleX(0.8810);transform-origin:0 0;color:#111;">244.4754</div>
<div class="t" style="left:1148.53px;top:464.66px;font-size:12.084px;transform:scaleX(0.8885);transform-origin:0 0;color:#111;">244.525</div>
<div class="t" style="left:1268.88px;top:465.04px;font-size:11.784px;transform:scaleX(1.0563);transform-origin:0 0;font-weight:bold;color:#111;">244.5754</div>
<div class="t" style="left:1396.70px;top:465.04px;font-size:11.784px;transform:scaleX(0.9174);transform-origin:0 0;color:#111;">244.625</div>
<div class="t" style="left:1508.65px;top:465.35px;font-size:11.681px;transform:scaleX(0.9134);transform-origin:0 0;color:#111;">244.6754</div>
<div class="t" style="left:1172.47px;top:484.37px;font-size:11.543px;transform:scaleX(1.1806);transform-origin:0 0;color:#1c2070;">&lt;---  Defocus  -</div>
<div class="a" style="left:1271px;top:482px;width:49px;height:16px;background:#3c3c3c"></div>
<div class="t" style="left:1279.63px;top:483.60px;font-size:12.500px;transform:scaleX(1.0291);transform-origin:0 0;font-weight:bold;color:#f0f0f0;">B.F.L.</div>
<div class="t" style="left:1334.11px;top:483.35px;font-size:11.681px;transform:scaleX(1.0603);transform-origin:0 0;color:#1c2070;">+  Defocus  ---&gt;</div>
<div class="a" style="left:1170px;top:506px;width:161px;height:31px;background:#e00000"></div>
<div class="a" style="left:1174px;top:510px;width:154px;height:23px;background:#f0f0f0;border-top:1px solid #fff;border-left:1px solid #fff;border-right:2px solid #505050;border-bottom:2px solid #505050;box-shadow:inset -1px -1px 0 #a0a0a0"></div>
<div class="t" style="left:1191.75px;top:515.12px;font-size:13.196px;transform:scaleX(0.9847);transform-origin:0 0;color:#111;">Update  Multi-SPOT</div>
<div class="a" style="left:1334px;top:506px;width:88px;height:31px;background:#f08a8a"></div>
<div class="a" style="left:1336px;top:510px;width:82px;height:23px;background:#f0f0f0;border-top:1px solid #fff;border-left:1px solid #fff;border-right:2px solid #505050;border-bottom:2px solid #505050;box-shadow:inset -1px -1px 0 #a0a0a0"></div>
<div class="t" style="left:1343.11px;top:514.49px;font-size:14.432px;transform:scaleX(0.9105);transform-origin:0 0;color:#111;">Auto Focus</div>
<div class="a" style="left:1588px;top:75px;width:71px;height:17px;background:#fff;border:1px solid #6a6a6a;box-shadow:inset 1px 1px 0 #e0e0e0"></div>
<div class="t" style="left:1609.85px;top:79.49px;font-size:8.365px;transform:scaleX(1.2959);transform-origin:0 0;color:#111;">Angle</div>
<div class="t" style="left:1593.69px;top:94.58px;font-size:12.154px;transform:scaleX(1.0365);transform-origin:0 0;font-weight:bold;color:#1010c8;">0.0537</div>
<div class="a" style="left:1588px;top:112px;width:70px;height:17px;background:#dcdcdc;border:1px solid #6a6a6a;box-shadow:inset 1px 1px 0 #f8f8f8"></div>
<div class="t" style="left:1606.29px;top:114.85px;font-size:9.599px;transform:scaleX(1.1492);transform-origin:0 0;color:#111;">Height</div>
<div class="t" style="left:1603.41px;top:130.31px;font-size:11.457px;transform:scaleX(0.9382);transform-origin:0 0;color:#111;">8.776</div>
<div class="a" style="left:1588px;top:179px;width:71px;height:17px;background:#fff;border:1px solid #6a6a6a;box-shadow:inset 1px 1px 0 #e0e0e0"></div>
<div class="t" style="left:1608.84px;top:181.85px;font-size:9.884px;transform:scaleX(1.1014);transform-origin:0 0;color:#111;">Angle</div>
<div class="t" style="left:1593.66px;top:197.80px;font-size:12.500px;transform:scaleX(1.0141);transform-origin:0 0;font-weight:bold;color:#1010c8;">0.03759</div>
<div class="a" style="left:1588px;top:216px;width:70px;height:17px;background:#dcdcdc;border:1px solid #6a6a6a;box-shadow:inset 1px 1px 0 #f8f8f8"></div>
<div class="t" style="left:1608.22px;top:218.47px;font-size:9.810px;transform:scaleX(1.1253);transform-origin:0 0;color:#111;">Height</div>
<div class="t" style="left:1602.79px;top:234.82px;font-size:11.111px;transform:scaleX(0.9988);transform-origin:0 0;color:#111;">6.143</div>
<div class="a" style="left:1588px;top:280px;width:71px;height:17px;background:#fff;border:1px solid #6a6a6a;box-shadow:inset 1px 1px 0 #e0e0e0"></div>
<div class="t" style="left:1609.62px;top:282.93px;font-size:9.978px;transform:scaleX(1.0812);transform-origin:0 0;color:#111;">Angle</div>
<div class="t" style="left:1593.59px;top:300.42px;font-size:11.391px;transform:scaleX(1.1039);transform-origin:0 0;font-weight:bold;color:#1010c8;">0.02148</div>
<div class="a" style="left:1588px;top:317px;width:70px;height:17px;background:#dcdcdc;border:1px solid #6a6a6a;box-shadow:inset 1px 1px 0 #f8f8f8"></div>
<div class="t" style="left:1608.34px;top:320.90px;font-size:8.534px;transform:scaleX(1.2858);transform-origin:0 0;color:#111;">Height</div>
<div class="t" style="left:1602.81px;top:334.78px;font-size:12.158px;transform:scaleX(0.9128);transform-origin:0 0;color:#111;">3.510</div>
<div class="a" style="left:1588px;top:387px;width:71px;height:17px;background:#fff;border:1px solid #6a6a6a;box-shadow:inset 1px 1px 0 #e0e0e0"></div>
<div class="t" style="left:1609.62px;top:389.93px;font-size:9.978px;transform:scaleX(1.0812);transform-origin:0 0;color:#111;">Angle</div>
<div class="t" style="left:1612.86px;top:406.50px;font-size:12.135px;transform:scaleX(0.9778);transform-origin:0 0;font-weight:bold;color:#1010c8;">0</div>
<div class="a" style="left:1588px;top:425px;width:70px;height:17px;background:#dcdcdc;border:1px solid #6a6a6a;box-shadow:inset 1px 1px 0 #f8f8f8"></div>
<div class="t" style="left:1608.37px;top:428.08px;font-size:8.962px;transform:scaleX(1.2258);transform-origin:0 0;color:#111;">Height</div>
<div class="t" style="left:1603.38px;top:441.86px;font-size:12.050px;transform:scaleX(0.8991);transform-origin:0 0;color:#111;">0.000</div>
<div class="a" style="left:1px;top:505px;width:855px;height:493px;border:1px solid #4a565e;border-radius:5px 5px 0 0;background:linear-gradient(#bdc9d5 0px,#c8d5e1 16px,#d6e3ef 30px,#d9e5f0 31px,#dce7f1 100%);box-shadow:inset 0 0 0 1px rgba(255,255,255,.7)"></div>
<div class="a" style="left:9px;top:536px;width:839px;height:450px;background:#fff"></div>
<div class="a" style="left:9px;top:986px;width:839px;height:4px;background:#f0f0f0"></div>
<svg style="left:11px;top:517px" width="18" height="14" viewBox="0 0 18 14"><path d="M4.5 3.5 Q8.5 -0.5 12.5 3" stroke="#50c8c0" stroke-width="2.2" fill="none"/><rect x="8" y="3.5" width="7" height="8" fill="#fff"/><path d="M15 6.5 L17 8 L15 9.5z" fill="#8a8a8a"/><rect x="1.5" y="4.5" width="6" height="6" fill="#fff" stroke="#000"/><path d="M2 6.5 H7" stroke="#30a0a0"/><rect x="4.5" y="7.5" width="5" height="4.5" fill="#fff" stroke="#000"/></svg>
<div class="t" style="left:30.81px;top:520.18px;font-size:11.221px;transform:scaleX(1.0937);transform-origin:0 0;color:#8591a0;">Multi-Analisys Plot</div>
<div class="a" style="left:746.5px;top:515.5px;width:30.5px;height:16.899999999999977px;border:1px solid #7c8a98;border-radius:3px;background:linear-gradient(#d3dee9,#cbd7e3 50%,#c4d1de 51%,#ccd8e4);box-shadow:inset 0 0 0 1px rgba(255,255,255,.45)"></div>
<div class="a" style="left:756.2px;top:524.5px;width:11px;height:5px;border:1px solid #4e5660;background:#fff;border-radius:1px"></div>
<div class="a" style="left:780px;top:515.5px;width:31px;height:16.899999999999977px;border:1px solid #7c8a98;border-radius:3px;background:linear-gradient(#d3dee9,#cbd7e3 50%,#c4d1de 51%,#ccd8e4);box-shadow:inset 0 0 0 1px rgba(255,255,255,.45)"></div>
<div class="a" style="left:790.0px;top:519.5px;width:11px;height:9px;border:1px solid #4e5660;background:#fff;border-radius:1px"></div>
<div class="a" style="left:793.0px;top:522.5px;width:5px;height:3px;border:1px solid #4e5660"></div>
<div class="a" style="left:814px;top:515.5px;width:31px;height:16.899999999999977px;border:1px solid #7c8a98;border-radius:3px;background:linear-gradient(#d3dee9,#cbd7e3 50%,#c4d1de 51%,#ccd8e4);box-shadow:inset 0 0 0 1px rgba(255,255,255,.45)"></div>
<svg style="left:822.5px;top:518.0px" width="14" height="12" viewBox="0 0 14 12"><path d="M3.5 2.8 L10.5 9.2 M10.5 2.8 L3.5 9.2" stroke="#4e5660" stroke-width="4" stroke-linecap="round"/><path d="M3.5 2.8 L10.5 9.2 M10.5 2.8 L3.5 9.2" stroke="#fff" stroke-width="2.2" stroke-linecap="round"/></svg>
<div class="t" style="left:14.75px;top:536.85px;font-size:12.505px;transform:scaleX(0.8648);transform-origin:0 0;color:#111;">LAYOUT</div>
<div class="t" style="left:393.62px;top:538.74px;font-size:9.754px;transform:scaleX(1.0524);transform-origin:0 0;color:#111;">% Pupil Radius</div>
<div class="t" style="left:493.77px;top:538.56px;font-size:10.204px;transform:scaleX(0.9776);transform-origin:0 0;color:#111;">LONG.SPHER.</div>
<div class="t" style="left:395.53px;top:553.42px;font-size:9.423px;transform:scaleX(1.1306);transform-origin:0 0;color:#111;">100</div>
<div class="t" style="left:396.24px;top:571.51px;font-size:10.453px;transform:scaleX(0.9381);transform-origin:0 0;color:#111;">90</div>
<div class="t" style="left:396.48px;top:589.74px;font-size:10.855px;transform:scaleX(0.9268);transform-origin:0 0;color:#111;">80</div>
<div class="t" style="left:395.22px;top:612.13px;font-size:9.102px;transform:scaleX(1.2059);transform-origin:0 0;color:#111;">70</div>
<div class="t" style="left:396.24px;top:630.41px;font-size:9.204px;transform:scaleX(1.0717);transform-origin:0 0;color:#111;">60</div>
<div class="t" style="left:395.25px;top:651.13px;font-size:9.102px;transform:scaleX(1.1760);transform-origin:0 0;color:#111;">50</div>
<div class="t" style="left:396.53px;top:669.28px;font-size:9.261px;transform:scaleX(1.0810);transform-origin:0 0;color:#111;">40</div>
<div class="t" style="left:395.28px;top:688.16px;font-size:9.587px;transform:scaleX(1.1388);transform-origin:0 0;color:#111;">30</div>
<div class="t" style="left:396.12px;top:708.39px;font-size:9.044px;transform:scaleX(1.1629);transform-origin:0 0;color:#111;">20</div>
<div class="t" style="left:395.25px;top:727.23px;font-size:9.102px;transform:scaleX(1.1760);transform-origin:0 0;color:#111;">10</div>
<div class="t" style="left:405.19px;top:754.00px;font-size:9.313px;transform:scaleX(1.1511);transform-origin:0 0;color:#111;">4.676</div>
<div class="t" style="left:457.03px;top:752.62px;font-size:10.884px;transform:scaleX(1.0217);transform-origin:0 0;color:#111;">2.338</div>
<div class="t" style="left:511.57px;top:754.00px;font-size:9.313px;transform:scaleX(1.0188);transform-origin:0 0;color:#111;">0</div>
<div class="t" style="left:626.75px;top:544.50px;font-size:11.818px;transform:scaleX(0.9115);transform-origin:0 0;color:#111;">SPOT-DIAGRAM</div>
<div class="t" style="left:816.57px;top:544.50px;font-size:11.818px;transform:scaleX(0.8889);transform-origin:0 0;color:#111;">FIELD</div>
<div class="t" style="left:826.75px;top:593.22px;font-size:11.111px;transform:scaleX(0.9906);transform-origin:0 0;color:#111;">Max</div>
<div class="t" style="left:827.92px;top:666.00px;font-size:12.043px;transform:scaleX(0.8590);transform-origin:0 0;color:#111;">0.7</div>
<div class="t" style="left:827.90px;top:736.82px;font-size:11.481px;transform:scaleX(0.8133);transform-origin:0 0;color:#111;">0</div>
<div class="t" style="left:634.54px;top:736.82px;font-size:11.481px;transform:scaleX(0.9208);transform-origin:0 0;color:#111;">0.100</div>
<div class="t" style="left:32.84px;top:770.48px;font-size:12.500px;transform:scaleX(0.8474);transform-origin:0 0;color:#111;">DIFFRACTION  MTF</div>
<div class="t" style="left:167.58px;top:769.44px;font-size:13.288px;transform:scaleX(0.7898);transform-origin:0 0;color:#111;">Field=0</div>
<div class="t" style="left:229.26px;top:770.45px;font-size:11.403px;transform:scaleX(0.9440);transform-origin:0 0;color:#111;">WaveL.(micron)   0.6562</div>
<div class="t" style="left:16.71px;top:783.08px;font-size:10.866px;transform:scaleX(0.7534);transform-origin:0 0;color:#111;">1</div>
<div class="t" style="left:16.64px;top:818.20px;font-size:11.391px;transform:scaleX(0.9062);transform-origin:0 0;color:#111;">0.8</div>
<div class="t" style="left:16.56px;top:852.66px;font-size:11.834px;transform:scaleX(0.8963);transform-origin:0 0;color:#111;">0.6</div>
<div class="t" style="left:16.52px;top:887.20px;font-size:12.017px;transform:scaleX(0.8572);transform-origin:0 0;color:#111;">0.4</div>
<div class="t" style="left:16.57px;top:921.97px;font-size:11.834px;transform:scaleX(0.8930);transform-origin:0 0;color:#111;">0.2</div>
<div class="t" style="left:16.53px;top:958.42px;font-size:11.111px;transform:scaleX(0.9000);transform-origin:0 0;color:#111;">0</div>
<div class="t" style="left:35.85px;top:963.65px;font-size:10.598px;transform:scaleX(1.0057);transform-origin:0 0;color:#111;">FREQ.</div>
<div class="t" style="left:93.36px;top:963.68px;font-size:12.043px;transform:scaleX(0.8414);transform-origin:0 0;color:#111;">9.1</div>
<div class="t" style="left:161.29px;top:962.71px;font-size:13.662px;transform:scaleX(0.8057);transform-origin:0 0;color:#111;">18.2</div>
<div class="t" style="left:229.28px;top:962.71px;font-size:13.662px;transform:scaleX(0.7966);transform-origin:0 0;color:#111;">27.3</div>
<div class="t" style="left:295.91px;top:962.71px;font-size:13.662px;transform:scaleX(0.7824);transform-origin:0 0;color:#111;">36.4</div>
<div class="t" style="left:364.66px;top:962.92px;font-size:13.394px;transform:scaleX(0.7912);transform-origin:0 0;color:#111;">45.5</div>
<div class="t" style="left:300.93px;top:796.48px;font-size:12.367px;transform:scaleX(0.8880);transform-origin:0 0;color:#111;">Ideal</div>
<div class="t" style="left:301.77px;top:812.64px;font-size:12.281px;transform:scaleX(0.8970);transform-origin:0 0;color:#111;">TAN</div>
<div class="t" style="left:300.97px;top:830.64px;font-size:12.367px;transform:scaleX(0.8362);transform-origin:0 0;color:#111;">SAG</div>
<div class="t" style="left:400.24px;top:781.67px;font-size:11.488px;transform:scaleX(0.9519);transform-origin:0 0;color:#111;">FIELD CURV.</div>
<div class="t" style="left:500.45px;top:781.94px;font-size:10.981px;transform:scaleX(0.9445);transform-origin:0 0;color:#111;">100% FIELD</div>
<div class="t" style="left:416.81px;top:966.57px;font-size:10.430px;transform:scaleX(0.9987);transform-origin:0 0;color:#111;">-5.288</div>
<div class="t" style="left:463.92px;top:966.68px;font-size:10.382px;transform:scaleX(0.9923);transform-origin:0 0;color:#111;">-2.644</div>
<div class="t" style="left:510.94px;top:966.68px;font-size:10.382px;transform:scaleX(0.9055);transform-origin:0 0;color:#111;">0</div>
<div class="t" style="left:554.55px;top:966.31px;font-size:10.621px;transform:scaleX(0.9804);transform-origin:0 0;color:#111;">2.644</div>
<div class="t" style="left:597.59px;top:966.31px;font-size:10.621px;transform:scaleX(1.0390);transform-origin:0 0;color:#111;">5.288</div>
<div class="t" style="left:599.36px;top:790.55px;font-size:12.159px;transform:scaleX(0.6070);transform-origin:0 0;color:#111;">T</div>
<div class="t" style="left:598.36px;top:806.48px;font-size:12.367px;transform:scaleX(0.7823);transform-origin:0 0;color:#111;">S</div>
<div class="t" style="left:710.24px;top:770.25px;font-size:11.717px;transform:scaleX(0.9452);transform-origin:0 0;color:#111;">DISTORTION</div>
<div class="t" style="left:645.44px;top:786.06px;font-size:11.508px;transform:scaleX(0.9220);transform-origin:0 0;color:#111;">(Pincushion)</div>
<div class="t" style="left:740.07px;top:785.77px;font-size:12.131px;transform:scaleX(0.8427);transform-origin:0 0;color:#111;">100% Field</div>
<div class="t" style="left:814.61px;top:786.06px;font-size:11.508px;transform:scaleX(0.8875);transform-origin:0 0;color:#111;">(Barrel)</div>
<div class="t" style="left:646.54px;top:963.94px;font-size:10.817px;transform:scaleX(0.9411);transform-origin:0 0;color:#111;">0.019%</div>
<div class="t" style="left:743.76px;top:964.01px;font-size:10.655px;transform:scaleX(0.8957);transform-origin:0 0;color:#111;">0</div>
<div class="t" style="left:806.54px;top:964.01px;font-size:10.655px;transform:scaleX(0.9412);transform-origin:0 0;color:#111;">-0.019%</div>
<svg width="1668" height="1068" style="left:0;top:0"><path d="M25 600.5 H41 M25 705.5 H41 M25 653.5 H41" stroke="#28a028" stroke-width="1" fill="none" /><path d="M41 600.5 H162.5 M41 705.5 H162.5" stroke="#c02020" stroke-width="1" fill="none" /><path d="M46 668 L161.5 705" stroke="#c02020" stroke-width="1" fill="none" /><path d="M162.5 600.5 L163.5 602 L164.5 614 L165.3 630 L165.6 653 L165.3 676 L164.5 692 L163.5 704 L162.5 705.5" stroke="#000" stroke-width="1" fill="none" /><path d="M41.6 600 V706 M43.5 600 V706 M45.5 600 V706" stroke="#1414c8" stroke-width="0.9" fill="none" /><path d="M44.2 641 V664" stroke="#000070" stroke-width="1.8" fill="none" /><path d="M41 653 H238.7" stroke="#5c5800" stroke-width="2" fill="none" /><path d="M238.7 652 L257 651.8 V650.6 L275 650.4 V649.2 H362 V653.2" stroke="#c02020" stroke-width="1" fill="none" /><path d="M238.7 653.3 H362" stroke="#30a030" stroke-width="1" fill="none" /><path d="M156.5 642.5 H163.5 L161.5 648 V658 L163.5 663.5 H156.5 L158.5 658 V648 Z" fill="#c8dcff" stroke="#1414c8" stroke-width="1"/><path d="M227.5 648.5 H230.5 L229 651.5 L230.5 654.5 V657.5 H227.5 M229 651.5 L227.5 653" stroke="#1414c8" stroke-width="1.3" fill="none" /><path d="M285 643 V662.5" stroke="#1414c8" stroke-width="2" fill="none" /><path d="M405.5 555.5 V750.5 H616.5 V555.5 H405.5" stroke="#6a6a6a" stroke-width="1" fill="none" /><path d="M511.5 555.5 V750.5" stroke="#6a6a6a" stroke-width="1" fill="none" /><path d="M405.5 555.5 H408 M511.5 555.5 H514 M616.5 555.5 H614 M405.5 565.2 H408 M511.5 565.2 H514 M616.5 565.2 H614 M405.5 575.0 H408 M511.5 575.0 H514 M616.5 575.0 H614 M405.5 584.8 H408 M511.5 584.8 H514 M616.5 584.8 H614 M405.5 594.5 H408 M511.5 594.5 H514 M616.5 594.5 H614 M405.5 604.2 H408 M511.5 604.2 H514 M616.5 604.2 H614 M405.5 614.0 H408 M511.5 614.0 H514 M616.5 614.0 H614 M405.5 623.8 H408 M511.5 623.8 H514 M616.5 623.8 H614 M405.5 633.5 H408 M511.5 633.5 H514 M616.5 633.5 H614 M405.5 643.2 H408 M511.5 643.2 H514 M616.5 643.2 H614 M405.5 653.0 H408 M511.5 653.0 H514 M616.5 653.0 H614 M405.5 662.8 H408 M511.5 662.8 H514 M616.5 662.8 H614 M405.5 672.5 H408 M511.5 672.5 H514 M616.5 672.5 H614 M405.5 682.2 H408 M511.5 682.2 H514 M616.5 682.2 H614 M405.5 692.0 H408 M511.5 692.0 H514 M616.5 692.0 H614 M405.5 701.8 H408 M511.5 701.8 H514 M616.5 701.8 H614 M405.5 711.5 H408 M511.5 711.5 H514 M616.5 711.5 H614 M405.5 721.2 H408 M511.5 721.2 H514 M616.5 721.2 H614 M405.5 731.0 H408 M511.5 731.0 H514 M616.5 731.0 H614 M405.5 740.8 H408 M511.5 740.8 H514 M616.5 740.8 H614 M405.5 750.5 H408 M511.5 750.5 H514 M616.5 750.5 H614" stroke="#6a6a6a" stroke-width="1" fill="none" /><path d="M458.5 750.5 V753 M563.5 750.5 V753" stroke="#6a6a6a" stroke-width="1" fill="none" /><path d="M446.9 555.5 C475 571, 495 582, 511.5 592.8 C525 602, 540 614, 549.8 620.7 C560 630, 566 637, 572.3 644.8 C582 656, 588 663, 593.2 670 C598 677, 600 683, 603.7 690 C607 696, 609 703, 611.2 710 C613 716, 614.5 722, 615 730 C616 737, 616.5 744, 616.5 750.5" stroke="#30c030" stroke-width="1" fill="none" /><circle cx="740" cy="601.5" r="17.8" fill="#fff" stroke="#000" stroke-width="2"/><g fill="#22c822"><rect x="744.2" y="600.8" width="1.6" height="1.6"/><rect x="742.8" y="604.3" width="1.6" height="1.6"/><rect x="739.2" y="605.8" width="1.6" height="1.6"/><rect x="735.7" y="604.3" width="1.6" height="1.6"/><rect x="734.2" y="600.8" width="1.6" height="1.6"/><rect x="735.7" y="597.2" width="1.6" height="1.6"/><rect x="739.2" y="595.8" width="1.6" height="1.6"/><rect x="742.8" y="597.2" width="1.6" height="1.6"/><rect x="748.6" y="602.6" width="1.6" height="1.6"/><rect x="746.4" y="607.0" width="1.6" height="1.6"/><rect x="742.3" y="609.8" width="1.6" height="1.6"/><rect x="737.4" y="610.1" width="1.6" height="1.6"/><rect x="733.0" y="607.9" width="1.6" height="1.6"/><rect x="730.2" y="603.8" width="1.6" height="1.6"/><rect x="729.9" y="598.9" width="1.6" height="1.6"/><rect x="732.1" y="594.5" width="1.6" height="1.6"/><rect x="736.2" y="591.7" width="1.6" height="1.6"/><rect x="741.1" y="591.4" width="1.6" height="1.6"/><rect x="745.5" y="593.6" width="1.6" height="1.6"/><rect x="748.3" y="597.7" width="1.6" height="1.6"/><rect x="752.8" y="600.8" width="1.6" height="1.6"/><rect x="751.7" y="605.9" width="1.6" height="1.6"/><rect x="748.8" y="610.3" width="1.6" height="1.6"/><rect x="744.4" y="613.2" width="1.6" height="1.6"/><rect x="739.2" y="614.2" width="1.6" height="1.6"/><rect x="734.1" y="613.2" width="1.6" height="1.6"/><rect x="729.7" y="610.3" width="1.6" height="1.6"/><rect x="726.8" y="605.9" width="1.6" height="1.6"/><rect x="725.8" y="600.8" width="1.6" height="1.6"/><rect x="726.8" y="595.6" width="1.6" height="1.6"/><rect x="729.7" y="591.2" width="1.6" height="1.6"/><rect x="734.1" y="588.3" width="1.6" height="1.6"/><rect x="739.2" y="587.2" width="1.6" height="1.6"/><rect x="744.4" y="588.3" width="1.6" height="1.6"/><rect x="748.8" y="591.2" width="1.6" height="1.6"/><rect x="751.7" y="595.6" width="1.6" height="1.6"/><rect x="745.2" y="600.8" width="1.6" height="1.6"/><rect x="749.8" y="600.8" width="1.6" height="1.6"/><rect x="739.2" y="606.8" width="1.6" height="1.6"/><rect x="739.2" y="611.2" width="1.6" height="1.6"/><rect x="733.2" y="600.8" width="1.6" height="1.6"/><rect x="728.8" y="600.8" width="1.6" height="1.6"/><rect x="739.2" y="594.8" width="1.6" height="1.6"/><rect x="739.2" y="590.2" width="1.6" height="1.6"/><rect x="739" y="600.5" width="2" height="2"/></g><circle cx="740" cy="671.9" r="17.8" fill="#fff" stroke="#000" stroke-width="2"/><g fill="#22c822"><rect x="744.2" y="671.1" width="1.6" height="1.6"/><rect x="742.8" y="674.7" width="1.6" height="1.6"/><rect x="739.2" y="676.1" width="1.6" height="1.6"/><rect x="735.7" y="674.7" width="1.6" height="1.6"/><rect x="734.2" y="671.1" width="1.6" height="1.6"/><rect x="735.7" y="667.6" width="1.6" height="1.6"/><rect x="739.2" y="666.1" width="1.6" height="1.6"/><rect x="742.8" y="667.6" width="1.6" height="1.6"/><rect x="748.6" y="673.0" width="1.6" height="1.6"/><rect x="746.4" y="677.4" width="1.6" height="1.6"/><rect x="742.3" y="680.2" width="1.6" height="1.6"/><rect x="737.4" y="680.5" width="1.6" height="1.6"/><rect x="733.0" y="678.3" width="1.6" height="1.6"/><rect x="730.2" y="674.2" width="1.6" height="1.6"/><rect x="729.9" y="669.3" width="1.6" height="1.6"/><rect x="732.1" y="664.9" width="1.6" height="1.6"/><rect x="736.2" y="662.1" width="1.6" height="1.6"/><rect x="741.1" y="661.8" width="1.6" height="1.6"/><rect x="745.5" y="664.0" width="1.6" height="1.6"/><rect x="748.3" y="668.1" width="1.6" height="1.6"/><rect x="752.8" y="671.1" width="1.6" height="1.6"/><rect x="751.7" y="676.3" width="1.6" height="1.6"/><rect x="748.8" y="680.7" width="1.6" height="1.6"/><rect x="744.4" y="683.6" width="1.6" height="1.6"/><rect x="739.2" y="684.6" width="1.6" height="1.6"/><rect x="734.1" y="683.6" width="1.6" height="1.6"/><rect x="729.7" y="680.7" width="1.6" height="1.6"/><rect x="726.8" y="676.3" width="1.6" height="1.6"/><rect x="725.8" y="671.1" width="1.6" height="1.6"/><rect x="726.8" y="666.0" width="1.6" height="1.6"/><rect x="729.7" y="661.6" width="1.6" height="1.6"/><rect x="734.1" y="658.7" width="1.6" height="1.6"/><rect x="739.2" y="657.6" width="1.6" height="1.6"/><rect x="744.4" y="658.7" width="1.6" height="1.6"/><rect x="748.8" y="661.6" width="1.6" height="1.6"/><rect x="751.7" y="666.0" width="1.6" height="1.6"/><rect x="745.2" y="671.1" width="1.6" height="1.6"/><rect x="749.8" y="671.1" width="1.6" height="1.6"/><rect x="739.2" y="677.1" width="1.6" height="1.6"/><rect x="739.2" y="681.6" width="1.6" height="1.6"/><rect x="733.2" y="671.1" width="1.6" height="1.6"/><rect x="728.8" y="671.1" width="1.6" height="1.6"/><rect x="739.2" y="665.1" width="1.6" height="1.6"/><rect x="739.2" y="660.6" width="1.6" height="1.6"/><rect x="739" y="670.9" width="2" height="2"/></g><circle cx="740" cy="736.2" r="17.8" fill="#fff" stroke="#000" stroke-width="2"/><g fill="#22c822"><rect x="744.2" y="735.5" width="1.6" height="1.6"/><rect x="742.8" y="739.0" width="1.6" height="1.6"/><rect x="739.2" y="740.5" width="1.6" height="1.6"/><rect x="735.7" y="739.0" width="1.6" height="1.6"/><rect x="734.2" y="735.5" width="1.6" height="1.6"/><rect x="735.7" y="731.9" width="1.6" height="1.6"/><rect x="739.2" y="730.5" width="1.6" height="1.6"/><rect x="742.8" y="731.9" width="1.6" height="1.6"/><rect x="748.6" y="737.3" width="1.6" height="1.6"/><rect x="746.4" y="741.7" width="1.6" height="1.6"/><rect x="742.3" y="744.5" width="1.6" height="1.6"/><rect x="737.4" y="744.8" width="1.6" height="1.6"/><rect x="733.0" y="742.6" width="1.6" height="1.6"/><rect x="730.2" y="738.5" width="1.6" height="1.6"/><rect x="729.9" y="733.6" width="1.6" height="1.6"/><rect x="732.1" y="729.2" width="1.6" height="1.6"/><rect x="736.2" y="726.4" width="1.6" height="1.6"/><rect x="741.1" y="726.1" width="1.6" height="1.6"/><rect x="745.5" y="728.3" width="1.6" height="1.6"/><rect x="748.3" y="732.4" width="1.6" height="1.6"/><rect x="752.8" y="735.5" width="1.6" height="1.6"/><rect x="751.7" y="740.6" width="1.6" height="1.6"/><rect x="748.8" y="745.0" width="1.6" height="1.6"/><rect x="744.4" y="747.9" width="1.6" height="1.6"/><rect x="739.2" y="749.0" width="1.6" height="1.6"/><rect x="734.1" y="747.9" width="1.6" height="1.6"/><rect x="729.7" y="745.0" width="1.6" height="1.6"/><rect x="726.8" y="740.6" width="1.6" height="1.6"/><rect x="725.8" y="735.5" width="1.6" height="1.6"/><rect x="726.8" y="730.3" width="1.6" height="1.6"/><rect x="729.7" y="725.9" width="1.6" height="1.6"/><rect x="734.1" y="723.0" width="1.6" height="1.6"/><rect x="739.2" y="722.0" width="1.6" height="1.6"/><rect x="744.4" y="723.0" width="1.6" height="1.6"/><rect x="748.8" y="725.9" width="1.6" height="1.6"/><rect x="751.7" y="730.3" width="1.6" height="1.6"/><rect x="745.2" y="735.5" width="1.6" height="1.6"/><rect x="749.8" y="735.5" width="1.6" height="1.6"/><rect x="739.2" y="741.5" width="1.6" height="1.6"/><rect x="739.2" y="746.0" width="1.6" height="1.6"/><rect x="733.2" y="735.5" width="1.6" height="1.6"/><rect x="728.8" y="735.5" width="1.6" height="1.6"/><rect x="739.2" y="729.5" width="1.6" height="1.6"/><rect x="739.2" y="725.0" width="1.6" height="1.6"/><rect x="739" y="735.2" width="2" height="2"/></g><path d="M641.1 671 V736.5" stroke="#e00000" stroke-width="2" fill="none" /><path d="M33.5 786.5 H370.5 V960.5 H33.5 Z" stroke="#000" stroke-width="1.2" fill="none" /><path d="M33.5 821.4 H37 M33.5 856.2 H37 M33.5 891.1 H37 M33.5 925.7 H37" stroke="#000" stroke-width="1" fill="none" /><path d="M100.5 960.5 V965 M168.5 960.5 V965 M235.5 960.5 V965 M303.5 960.5 V965" stroke="#000" stroke-width="1" fill="none" /><path d="M33.5 786.3 L58.1 803.2 L83.4 818.6 L98.8 829.9 L119.9 842.5 L131.2 850.2 L146.6 860.1 L163.5 869.9 L185.9 884 L200 891.7 L216.6 901.5 L234.9 910.2 L254.4 921.5 L277 931.2 L308.3 945.2 L339.6 955 L361.2 959.3 L370.4 960.4" stroke="#000" stroke-width="1.1" fill="none" /><path d="M33.5 786.3 L56.7 809.5 L79.2 837.6 L94.6 858.7 L114.3 881.2 L138.2 900.8 L162.1 912.1 L181.7 919.8 L200 924.4 L209 926.4 L234.9 935.5 L261.9 945.2 L283.5 954.4 L304 959.8 L370.4 960.4" stroke="#2020a0" stroke-width="1.1" fill="none" /><path d="M327 804.5 H360" stroke="#000" stroke-width="1.1" fill="none" /><path d="M327 821.5 H360" stroke="#2020a0" stroke-width="1.1" fill="none" /><path d="M327 838.5 H360" stroke="#c02020" stroke-width="1.1" fill="none" /><path d="M511.5 790.5 V960.5 M419.5 960.5 H602.5 M419.5 960.5 V955 M465.5 960.5 V955 M556.5 960.5 V955 M602.5 960.5 V955" stroke="#6a6a6a" stroke-width="1" fill="none" /><path d="M511.5 807.5 H509 M511.5 824.5 H509 M511.5 841.5 H509 M511.5 858.5 H509 M511.5 875.5 H509 M511.5 909.5 H509" stroke="#6a6a6a" stroke-width="1" fill="none" /><path d="M597.6 791.5 L595.5 820 L594.4 833.9 L593.2 850.9 L592.4 884.9 L591.3 917.4 L591.3 960.5" stroke="#1010c0" stroke-width="1.1" fill="none" /><path d="M602.2 793.7 L598.6 820 L596.6 837 L595.5 866.4 L594 883.4 L591.7 917.4" stroke="#c02020" stroke-width="1.1" fill="none" /><path d="M609.4 801.5 H623" stroke="#c02020" stroke-width="1.2" fill="none" /><path d="M609.4 814.5 H623" stroke="#1010c0" stroke-width="1.2" fill="none" /><path d="M740.5 801.5 V962 M736.5 801.5 H743.5 M736.5 882.5 H743.5 M646.5 962 H833.5 M646.5 962 V957.5 M833.5 962 V957.5" stroke="#000" stroke-width="1.2" fill="none" /><path d="M646.2 801.3 L655.5 809.5 C665 818, 673 827, 681.2 835.6 C686 841, 690 845, 694.1 850.1 C698 855, 701 859, 704.4 863 C708 869, 711 874, 714.8 879.1 C721 890, 726 901, 730.2 911.2 C733 918, 734 923, 735.4 928 C737 935, 738.5 941, 739.3 946 L740.3 962" stroke="#c02020" stroke-width="1.1" fill="none" /></svg>
<div class="a" style="left:856px;top:560px;width:773px;height:508px;border:1px solid #25303c;border-radius:5px 5px 0 0;background:linear-gradient(#95afca 0px,#a3bdd8 15px,#b7cee8 29px,#bcd3ea 30px,#bcd4ec 100%);box-shadow:inset 0 0 0 1px rgba(255,255,255,.7)"></div>
<div class="a" style="left:864px;top:590px;width:756px;height:470px;background:#f0f0f0"></div>
<svg style="left:866px;top:571px" width="18" height="14" viewBox="0 0 18 14"><path d="M4.5 3.5 Q8.5 -0.5 12.5 3" stroke="#50c8c0" stroke-width="2.2" fill="none"/><rect x="8" y="3.5" width="7" height="8" fill="#fff"/><path d="M15 6.5 L17 8 L15 9.5z" fill="#8a8a8a"/><rect x="1.5" y="4.5" width="6" height="6" fill="#fff" stroke="#000"/><path d="M2 6.5 H7" stroke="#30a0a0"/><rect x="4.5" y="7.5" width="5" height="4.5" fill="#fff" stroke="#000"/></svg>
<div class="t" style="left:885.30px;top:573.65px;font-size:11.387px;transform:scaleX(0.9723);transform-origin:0 0;color:#101418;">RMS Spot size Versus ....</div>
<div class="a" style="left:1519.4px;top:569.2px;width:30.899999999999864px;height:17.299999999999955px;border:1px solid #44546a;border-radius:3px;background:linear-gradient(#dde9f5,#c9dbee 45%,#a9c1da 50%,#b4cbe2 80%,#c8dcf0);box-shadow:inset 0 0 0 1px rgba(255,255,255,.45)"></div>
<div class="a" style="left:1529.3px;top:578.4px;width:11px;height:5px;border:1px solid #3a3e44;background:#fff;border-radius:1px"></div>
<div class="a" style="left:1553.5px;top:569.2px;width:30.59999999999991px;height:17.299999999999955px;border:1px solid #44546a;border-radius:3px;background:linear-gradient(#dde9f5,#c9dbee 45%,#a9c1da 50%,#b4cbe2 80%,#c8dcf0);box-shadow:inset 0 0 0 1px rgba(255,255,255,.45)"></div>
<div class="a" style="left:1563.3px;top:573.4px;width:11px;height:9px;border:1px solid #3a3e44;background:#fff;border-radius:1px"></div>
<div class="a" style="left:1566.3px;top:576.4px;width:5px;height:3px;border:1px solid #3a3e44"></div>
<div class="a" style="left:1587.3px;top:569.2px;width:31.200000000000045px;height:17.299999999999955px;border:1px solid #3a1418;border-radius:3px;background:linear-gradient(#eeb0a0,#e48a76 45%,#c8402a 50%,#d65838 80%,#e6907a);box-shadow:inset 0 0 0 1px rgba(255,255,255,.45)"></div>
<svg style="left:1595.9px;top:571.9px" width="14" height="12" viewBox="0 0 14 12"><path d="M3.5 2.8 L10.5 9.2 M10.5 2.8 L3.5 9.2" stroke="#3a3e44" stroke-width="4" stroke-linecap="round"/><path d="M3.5 2.8 L10.5 9.2 M10.5 2.8 L3.5 9.2" stroke="#fff" stroke-width="2.2" stroke-linecap="round"/></svg>
<div class="a" style="left:872px;top:593px;width:576px;height:17px;border:1px solid #6a6a6a;box-shadow:inset 1px 1px 0 #fff"></div>
<div class="t" style="left:1086.76px;top:595.89px;font-size:10.915px;transform:scaleX(1.1051);transform-origin:0 0;font-weight:bold;color:#111;">C11-EdgeHD-tele-35x.atm</div>
<div class="a" style="left:1072px;top:622px;width:81px;height:33px;background:#f0f0f0;border:1px solid #404040;box-shadow:inset 1px 1px 0 #fff, inset -2px -2px 0 #808080"></div>
<div class="a" style="left:1076px;top:626px;width:73px;height:25px;border:1px dotted #303030"></div>
<div class="t" style="left:1086.87px;top:632.22px;font-size:12.017px;transform:scaleX(0.9015);transform-origin:0 0;color:#111;">AutoFocus</div>
<div class="a" style="left:1184.4px;top:617.5px;width:119.19999999999982px;height:36px;background:#f0f0f0;border-top:1px solid #fff;border-left:1px solid #fff;border-right:2px solid #7a7a7a;border-bottom:2px solid #7a7a7a"></div>
<div class="t" style="left:1204.86px;top:623.45px;font-size:11.508px;transform:scaleX(1.0068);transform-origin:0 0;font-weight:bold;color:#111;">RMS  spot size</div>
<div class="t" style="left:1234.48px;top:636.44px;font-size:11.629px;transform:scaleX(0.9670);transform-origin:0 0;font-weight:bold;color:#111;">vs.  Field</div>
<div class="a" style="left:1320.4px;top:617.5px;width:119.19999999999982px;height:36px;background:#f0f0f0;border-top:1px solid #fff;border-left:1px solid #fff;border-right:2px solid #7a7a7a;border-bottom:2px solid #7a7a7a"></div>
<div class="t" style="left:1335.25px;top:623.39px;font-size:11.508px;transform:scaleX(1.0079);transform-origin:0 0;font-weight:bold;color:#a0a0a0;">RMS  spot size</div>
<div class="t" style="left:1333.66px;top:637.11px;font-size:8.365px;transform:scaleX(1.4133);transform-origin:0 0;font-weight:bold;color:#a0a0a0;">vs.  WaveLength</div>
<div class="a" style="left:1456.4px;top:617.5px;width:119.19999999999982px;height:36px;background:#f0f0f0;border-top:1px solid #fff;border-left:1px solid #fff;border-right:2px solid #7a7a7a;border-bottom:2px solid #7a7a7a"></div>
<div class="t" style="left:1472.86px;top:623.39px;font-size:11.508px;transform:scaleX(1.0068);transform-origin:0 0;font-weight:bold;color:#a0a0a0;">RMS  spot size</div>
<div class="t" style="left:1500.90px;top:635.54px;font-size:12.135px;transform:scaleX(0.9190);transform-origin:0 0;font-weight:bold;color:#a0a0a0;">vs.  Focus</div>
<div class="a" style="left:872px;top:668px;width:192px;height:218px;border:1px solid #a8a8a8;box-shadow:1px 1px 0 #fff inset, 1px 1px 0 #fff"></div>
<div class="t" style="left:880.15px;top:686.53px;font-size:12.505px;transform:scaleX(0.8694);transform-origin:0 0;color:#111;">Reference  BFL</div>
<div class="t" style="left:994.61px;top:686.58px;font-size:12.118px;transform:scaleX(0.8859);transform-origin:0 0;color:#111;">249.2517</div>
<div class="t" style="left:881.24px;top:713.69px;font-size:12.225px;transform:scaleX(0.9253);transform-origin:0 0;font-weight:bold;color:#111;">Actual   BFL</div>
<div class="a" style="left:976px;top:710px;width:79px;height:19px;background:#fff;border:1px solid #7c7c7c"></div>
<div class="t" style="left:981.74px;top:714.34px;font-size:11.567px;transform:scaleX(0.9295);transform-origin:0 0;color:#111;">244.5754</div>
<div class="t" style="left:881.13px;top:745.91px;font-size:11.627px;transform:scaleX(1.0250);transform-origin:0 0;font-weight:bold;color:#111;">Y-Field Angle</div>
<div class="a" style="left:976px;top:742px;width:79px;height:19px;background:#fff;border:1px solid #7c7c7c"></div>
<div class="t" style="left:980.65px;top:744.68px;font-size:12.043px;transform:scaleX(0.9141);transform-origin:0 0;color:#111;">.0537</div>
<div class="t" style="left:881.04px;top:765.70px;font-size:11.547px;transform:scaleX(1.0224);transform-origin:0 0;font-weight:bold;color:#111;">X-Field Angle</div>
<div class="a" style="left:976px;top:762px;width:79px;height:19px;background:#fff;border:1px solid #7c7c7c"></div>
<div class="t" style="left:981.82px;top:766.07px;font-size:10.981px;transform:scaleX(0.9285);transform-origin:0 0;color:#111;">0</div>
<div class="t" style="left:879.51px;top:821.28px;font-size:12.500px;transform:scaleX(0.9663);transform-origin:0 0;font-weight:bold;color:#111;">Field Curv.Rad.</div>
<div class="a" style="left:976px;top:817px;width:79px;height:19px;background:#fff;border:1px solid #7c7c7c"></div>
<div class="t" style="left:978.57px;top:821.30px;font-size:10.817px;transform:scaleX(0.9327);transform-origin:0 0;color:#111;">0</div>
<div class="t" style="left:910.36px;top:856.02px;font-size:13.379px;transform:scaleX(1.0480);transform-origin:0 0;color:#111;">Scale</div>
<div class="a" style="left:976px;top:854px;width:79px;height:19px;background:#fff;border:1px solid #7c7c7c"></div>
<div class="t" style="left:978.70px;top:858.31px;font-size:11.457px;transform:scaleX(0.8858);transform-origin:0 0;color:#111;">0</div>
<div class="a" style="left:872px;top:901px;width:192px;height:137px;border:1px solid #a8a8a8;box-shadow:1px 1px 0 #fff inset, 1px 1px 0 #fff"></div>
<div class="a" style="left:878px;top:895px;width:142px;height:10px;background:#f0f0f0"></div>
<div class="t" style="left:881.49px;top:895.02px;font-size:12.372px;transform:scaleX(0.9827);transform-origin:0 0;font-weight:bold;color:#111;">WaveLengths Selection</div>
<div class="a" style="left:891px;top:918px;width:73px;height:16.5px;background:#00ff00"></div>
<div class="t" style="left:894.17px;top:921.49px;font-size:11.391px;transform:scaleX(1.0897);transform-origin:0 0;font-weight:bold;">0.6562</div>
<div class="a" style="left:951.5px;top:920px;width:12px;height:13px;background:#fff;border:2px solid #f0f0f0;border-top-color:#808080;border-left-color:#808080"></div>
<svg style="left:952.5px;top:922px" width="11" height="10"><path d="M1.5 4.5 L4.2 7.5 L9.5 1.5" stroke="#000" stroke-width="2.2" fill="none"/></svg>
<div class="a" style="left:891px;top:934.5px;width:73px;height:16.5px;background:#0000ff"></div>
<div class="t" style="left:893.84px;top:937.31px;font-size:12.159px;transform:scaleX(1.0496);transform-origin:0 0;font-weight:bold;color:#fff;text-shadow:1px 0 0 #808080,-1px 0 0 #808080,0 1px 0 #808080,0 -1px 0 #808080;">0.0000</div>
<div class="a" style="left:951.5px;top:936.5px;width:12px;height:13px;background:#fff;border:2px solid #f0f0f0;border-top-color:#808080;border-left-color:#808080"></div>
<div class="a" style="left:891px;top:950px;width:73px;height:16.5px;background:#ff0000"></div>
<div class="t" style="left:893.84px;top:952.73px;font-size:12.078px;transform:scaleX(1.0567);transform-origin:0 0;font-weight:bold;color:#fff;text-shadow:1px 0 0 #808080,-1px 0 0 #808080,0 1px 0 #808080,0 -1px 0 #808080;">0.0000</div>
<div class="a" style="left:951.5px;top:952px;width:12px;height:13px;background:#fff;border:2px solid #f0f0f0;border-top-color:#808080;border-left-color:#808080"></div>
<div class="a" style="left:969px;top:918px;width:73px;height:16.5px;background:#ff00ff"></div>
<div class="t" style="left:971.84px;top:920.73px;font-size:12.078px;transform:scaleX(1.0567);transform-origin:0 0;font-weight:bold;color:#fff;text-shadow:1px 0 0 #808080,-1px 0 0 #808080,0 1px 0 #808080,0 -1px 0 #808080;">0.0000</div>
<div class="a" style="left:1029.5px;top:920px;width:12px;height:13px;background:#fff;border:2px solid #f0f0f0;border-top-color:#808080;border-left-color:#808080"></div>
<div class="a" style="left:969px;top:934.5px;width:73px;height:16.5px;background:#804000"></div>
<div class="t" style="left:971.84px;top:937.31px;font-size:12.159px;transform:scaleX(1.0496);transform-origin:0 0;font-weight:bold;color:#fff;text-shadow:1px 0 0 #808080,-1px 0 0 #808080,0 1px 0 #808080,0 -1px 0 #808080;">0.0000</div>
<div class="a" style="left:1029.5px;top:936.5px;width:12px;height:13px;background:#fff;border:2px solid #f0f0f0;border-top-color:#808080;border-left-color:#808080"></div>
<div class="a" style="left:969px;top:950px;width:73px;height:16.5px;background:#8000c0"></div>
<div class="t" style="left:971.84px;top:952.73px;font-size:12.078px;transform:scaleX(1.0567);transform-origin:0 0;font-weight:bold;color:#fff;text-shadow:1px 0 0 #808080,-1px 0 0 #808080,0 1px 0 #808080,0 -1px 0 #808080;">0.0000</div>
<div class="a" style="left:1029.5px;top:952px;width:12px;height:13px;background:#fff;border:2px solid #f0f0f0;border-top-color:#808080;border-left-color:#808080"></div>
<div class="a" style="left:1072px;top:666.5px;width:547px;height:380px;background:#fff;border:1px solid #8a8a8a"></div>
<div class="t" style="left:1119.75px;top:669.24px;font-size:9.920px;transform:scaleX(1.0714);transform-origin:0 0;color:#111;">RMS spot radius</div>
<div class="t" style="left:1078.52px;top:682.81px;font-size:10.817px;transform:scaleX(0.9767);transform-origin:0 0;color:#111;">0.0391</div>
<div class="t" style="left:1078.52px;top:699.76px;font-size:10.817px;transform:scaleX(0.9767);transform-origin:0 0;color:#111;">0.0372</div>
<div class="t" style="left:1078.52px;top:717.43px;font-size:10.817px;transform:scaleX(0.9767);transform-origin:0 0;color:#111;">0.0352</div>
<div class="t" style="left:1078.52px;top:734.39px;font-size:10.817px;transform:scaleX(0.9767);transform-origin:0 0;color:#111;">0.0333</div>
<div class="t" style="left:1078.70px;top:751.60px;font-size:10.982px;transform:scaleX(0.9638);transform-origin:0 0;color:#111;">0.0313</div>
<div class="t" style="left:1078.54px;top:769.00px;font-size:10.817px;transform:scaleX(0.9582);transform-origin:0 0;color:#111;">0.0294</div>
<div class="t" style="left:1078.54px;top:786.09px;font-size:10.817px;transform:scaleX(0.9582);transform-origin:0 0;color:#111;">0.0274</div>
<div class="t" style="left:1078.54px;top:803.20px;font-size:10.817px;transform:scaleX(0.9582);transform-origin:0 0;color:#111;">0.0254</div>
<div class="t" style="left:1078.72px;top:820.38px;font-size:10.982px;transform:scaleX(0.9638);transform-origin:0 0;color:#111;">0.0235</div>
<div class="t" style="left:1078.54px;top:837.68px;font-size:10.817px;transform:scaleX(0.9767);transform-origin:0 0;color:#111;">0.0215</div>
<div class="t" style="left:1078.52px;top:854.73px;font-size:10.817px;transform:scaleX(0.9767);transform-origin:0 0;color:#111;">0.0196</div>
<div class="t" style="left:1078.52px;top:872.45px;font-size:10.817px;transform:scaleX(0.9767);transform-origin:0 0;color:#111;">0.0176</div>
<div class="t" style="left:1078.52px;top:889.33px;font-size:10.817px;transform:scaleX(0.9767);transform-origin:0 0;color:#111;">0.0157</div>
<div class="t" style="left:1078.70px;top:906.57px;font-size:10.982px;transform:scaleX(0.9638);transform-origin:0 0;color:#111;">0.0137</div>
<div class="t" style="left:1078.53px;top:924.04px;font-size:10.817px;transform:scaleX(0.9947);transform-origin:0 0;color:#111;">0.0117</div>
<div class="t" style="left:1078.53px;top:941.07px;font-size:10.817px;transform:scaleX(0.9767);transform-origin:0 0;color:#111;">0.0098</div>
<div class="t" style="left:1078.71px;top:958.41px;font-size:10.982px;transform:scaleX(0.9638);transform-origin:0 0;color:#111;">0.0078</div>
<div class="t" style="left:1078.52px;top:975.72px;font-size:10.817px;transform:scaleX(0.9767);transform-origin:0 0;color:#111;">0.0059</div>
<div class="t" style="left:1078.52px;top:992.68px;font-size:10.817px;transform:scaleX(0.9767);transform-origin:0 0;color:#111;">0.0039</div>
<div class="t" style="left:1078.71px;top:1010.24px;font-size:10.982px;transform:scaleX(0.9456);transform-origin:0 0;color:#111;">0.0020</div>
<div class="t" style="left:1596.86px;top:763.73px;font-size:10.520px;transform:scaleX(0.9861);transform-origin:0 0;color:#111;">Airy</div>
<div class="t" style="left:1593.08px;top:1018.00px;font-size:12.500px;transform:scaleX(0.8995);transform-origin:0 0;color:#111;">Field</div>
<div class="t" style="left:1120.17px;top:1033.64px;font-size:10.655px;transform:scaleX(0.9151);transform-origin:0 0;color:#111;">0</div>
<div class="t" style="left:1343.73px;top:1033.52px;font-size:11.111px;transform:scaleX(0.9497);transform-origin:0 0;color:#111;">0.03</div>
<div class="t" style="left:1585.89px;top:1033.91px;font-size:12.084px;transform:scaleX(0.9135);transform-origin:0 0;color:#111;">0.05</div>
<svg width="1668" height="1068" style="left:0;top:0"><path d="M1121 701.8 H1594 M1121 719.1 H1594 M1121 736.3 H1594 M1121 753.5 H1594 M1121 770.8 H1594 M1121 788.0 H1594 M1121 805.2 H1594 M1121 822.5 H1594 M1121 839.7 H1594 M1121 857.0 H1594 M1121 874.2 H1594 M1121 891.4 H1594 M1121 908.7 H1594 M1121 925.9 H1594 M1121 943.1 H1594 M1121 960.4 H1594 M1121 977.6 H1594 M1121 994.8 H1594 M1121 1012.1 H1594 M1167.9 685 V1029 M1215.2 685 V1029 M1262.6 685 V1029 M1309.9 685 V1029 M1357.3 685 V1029 M1404.7 685 V1029 M1452.0 685 V1029 M1499.4 685 V1029 M1546.7 685 V1029" stroke="#e0e0e0" stroke-width="1" fill="none"/><path d="M1120.5 793.5 H1594" stroke="#6a6a6a" stroke-width="1" fill="none" /><path d="M1120.5 684.5 H1594.5 V1029.5 H1120.5 Z" stroke="#000" stroke-width="1.3" fill="none" /><path d="M1120.5 886 H1215 L1263.3 884.2 L1310.7 882.3 L1357.2 878 L1405.5 873.9 L1452 869.8 L1500 865.6 L1547 861.5 L1594 857.6" stroke="#d00010" stroke-width="2" fill="none" /></svg>
<div class="a" style="left:0px;top:0px;width:1668px;height:2px;background:linear-gradient(#767676,#45484c)"></div>
</body></html>
